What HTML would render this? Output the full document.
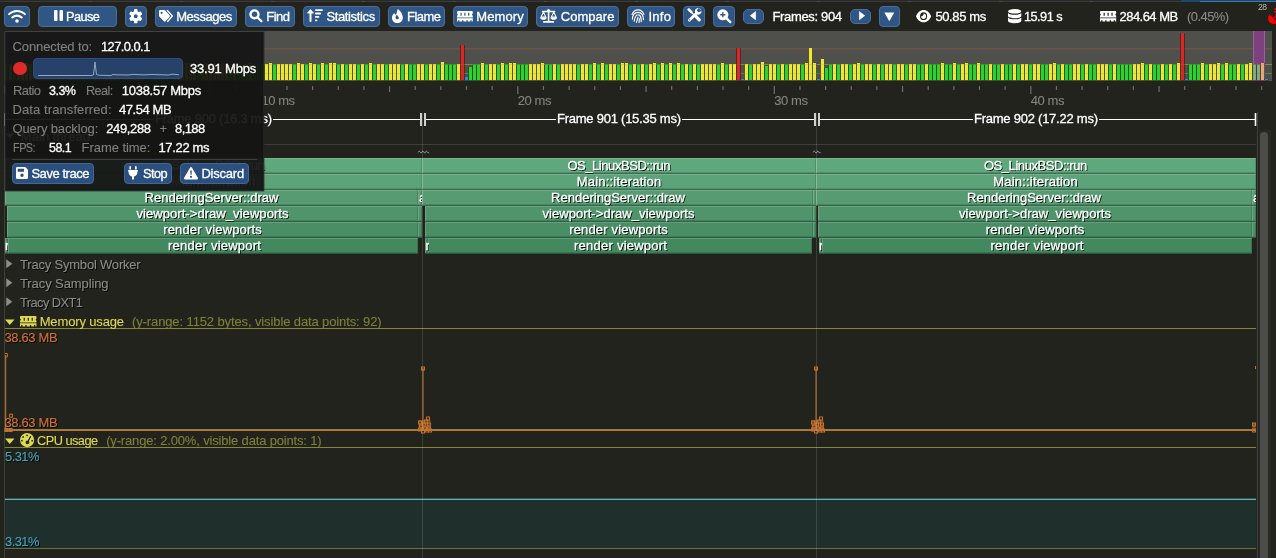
<!DOCTYPE html>
<html><head><meta charset="utf-8"><title>Tracy Profiler</title><style>
html,body{margin:0;padding:0;background:#21231c;}
#r{will-change:transform;position:relative;width:1276px;height:558px;overflow:hidden;background:#21231c;font-family:"Liberation Sans", sans-serif;font-size:13px;}
#r div,#r span,#r svg{position:absolute;}
#r svg{overflow:visible}
.t{white-space:pre;line-height:16px;height:16px;-webkit-text-stroke:.3px;}
.b{box-sizing:border-box;border-radius:4px;}
</style></head><body><div id="r">
<div style="left:0px;top:0px;width:1276px;height:1px;background:#2a282a;"></div>
<div style="left:0px;top:1px;width:1276px;height:1px;background:#3a3a37;"></div>
<div style="left:89px;top:1px;width:3px;height:1px;background:#4c4c49;"></div>
<div style="left:180px;top:1px;width:3px;height:1px;background:#4c4c49;"></div>
<div style="left:271px;top:1px;width:3px;height:1px;background:#4c4c49;"></div>
<div style="left:362px;top:1px;width:3px;height:1px;background:#4c4c49;"></div>
<div style="left:453px;top:1px;width:3px;height:1px;background:#4c4c49;"></div>
<div style="left:544px;top:1px;width:3px;height:1px;background:#4c4c49;"></div>
<div style="left:635px;top:1px;width:3px;height:1px;background:#4c4c49;"></div>
<div style="left:726px;top:1px;width:3px;height:1px;background:#4c4c49;"></div>
<div style="left:817px;top:1px;width:3px;height:1px;background:#4c4c49;"></div>
<div style="left:908px;top:1px;width:3px;height:1px;background:#4c4c49;"></div>
<div style="left:999px;top:1px;width:3px;height:1px;background:#4c4c49;"></div>
<div style="left:1090px;top:1px;width:3px;height:1px;background:#4c4c49;"></div>
<div style="left:1181px;top:1px;width:3px;height:1px;background:#4c4c49;"></div>
<div style="left:1181px;top:0px;width:95px;height:1px;background:#1c4a78;"></div>
<div style="left:1181px;top:1px;width:95px;height:1px;background:#4478a8;"></div>
<div style="left:1181px;top:0px;width:19px;height:2px;background:#1d4672;"></div>
<div class="b" style="left:4px;top:6px;width:26px;height:21px;background:#2f5684;border:1px solid #4a6d99;border-radius:4px"></div>
<svg style="left:7.9px;top:8.5px;color:#fff" width="18" height="14.2" viewBox="0 0 20 16" preserveAspectRatio="none"><path d="M1.2 5.8A12.5 12.5 0 0 1 18.8 5.8" fill="none" stroke="currentColor" stroke-width="2.3" stroke-linecap="round"/><path d="M4.8 9.6A7.4 7.4 0 0 1 15.2 9.6" fill="none" stroke="currentColor" stroke-width="2.3" stroke-linecap="round"/><circle cx="10" cy="13.6" r="2" fill="currentColor"/></svg>
<div class="b" style="left:38px;top:6px;width:79px;height:21px;background:#2f5684;border:1px solid #4a6d99;border-radius:4px"></div>
<svg style="left:54px;top:10px;color:#fff" width="9" height="11" viewBox="0 0 9 11" preserveAspectRatio="none"><rect x="0" y="0" width="3.5" height="11" rx="1.1" fill="currentColor"/><rect x="5.5" y="0" width="3.5" height="11" rx="1.1" fill="currentColor"/></svg>
<span class="t" style="left:66.4px;top:9.00px;color:#fff;font-size:13px;letter-spacing:-0.550px;transform:scaleX(0.9776);transform-origin:0 0;">Pause</span>
<div class="b" style="left:125px;top:6px;width:22px;height:21px;background:#2f5684;border:1px solid #4a6d99;border-radius:4px"></div>
<svg style="left:129.2px;top:8.5px;color:#fff" width="13.5" height="14.4" viewBox="0 0 16 16" preserveAspectRatio="none"><path fill-rule="evenodd" d="M6.70 0.77L9.30 0.77L9.61 3.05L11.48 4.14L13.61 3.26L14.92 5.51L13.09 6.92L13.09 9.08L14.92 10.49L13.61 12.74L11.48 11.86L9.61 12.95L9.30 15.23L6.70 15.23L6.39 12.95L4.52 11.86L2.39 12.74L1.08 10.49L2.91 9.08L2.91 6.92L1.08 5.51L2.39 3.26L4.52 4.14L6.39 3.05ZM10.90 8A2.9 2.9 0 1 0 5.10 8A2.9 2.9 0 1 0 10.90 8Z" fill="currentColor" stroke="currentColor" stroke-width="1.3" stroke-linejoin="round"/></svg>
<div class="b" style="left:155px;top:6px;width:82px;height:21px;background:#2f5684;border:1px solid #4a6d99;border-radius:4px"></div>
<svg style="left:158.8px;top:9.5px;color:#fff" width="14.4" height="12.5" viewBox="0 0 16 13" preserveAspectRatio="none"><path d="M0 1.2Q0 0 1.2 0H5.8Q6.4 0 6.9 .5L11.8 5.4Q12.6 6.3 11.8 7.2L7.2 11.8Q6.3 12.6 5.4 11.8L.5 6.9Q0 6.4 0 5.8ZM2.9 1.7A1.2 1.2 0 1 0 2.9 4.1A1.2 1.2 0 1 0 2.9 1.7Z" fill-rule="evenodd" fill="currentColor"/><path d="M9.3 .6L14.9 6.2L9.6 12" fill="none" stroke="currentColor" stroke-width="1.5" stroke-linecap="round" stroke-linejoin="round"/></svg>
<span class="t" style="left:176.2px;top:9.00px;color:#fff;font-size:13px;letter-spacing:-0.450px;">Messages</span>
<div class="b" style="left:245px;top:6px;width:50px;height:21px;background:#2f5684;border:1px solid #4a6d99;border-radius:4px"></div>
<svg style="left:249px;top:9.4px;color:#fff" width="13.7" height="13.4" viewBox="0 0 16 16" preserveAspectRatio="none"><circle cx="6.4" cy="6.4" r="4.7" fill="none" stroke="currentColor" stroke-width="2.8"/><path d="M10.4 10.4L14.6 14.6" stroke="currentColor" stroke-width="2.6" stroke-linecap="round"/></svg>
<span class="t" style="left:266.2px;top:9.00px;color:#fff;font-size:13px;letter-spacing:-0.499px;">Find</span>
<div class="b" style="left:303px;top:6px;width:77px;height:21px;background:#2f5684;border:1px solid #4a6d99;border-radius:4px"></div>
<svg style="left:307px;top:9.3px;color:#fff" width="16" height="12.7" viewBox="0 0 16 13" preserveAspectRatio="none"><path d="M3.5 12.4V2.2" stroke="currentColor" stroke-width="2" stroke-linecap="round" fill="none"/><path d="M.5 4.2L3.5 .6L6.5 4.2Z" fill="currentColor" stroke="currentColor" stroke-width=".8" stroke-linejoin="round"/><path d="M8.9 1.1H15M8.9 4.6H13.1M8.9 8.1H11.4M8.9 11.6H9.5" stroke="currentColor" stroke-width="1.9" stroke-linecap="round"/></svg>
<span class="t" style="left:326.4px;top:9.00px;color:#fff;font-size:13px;letter-spacing:-0.357px;">Statistics</span>
<div class="b" style="left:388px;top:6px;width:57px;height:21px;background:#2f5684;border:1px solid #4a6d99;border-radius:4px"></div>
<svg style="left:391.8px;top:8.7px;color:#fff" width="10.8" height="14.1" viewBox="0 0 12 16" preserveAspectRatio="none"><path fill-rule="evenodd" d="M6.6 0C9 2 12 5.6 12 9.8C12 13.4 9.4 16 6 16S0 13.4 0 9.8C0 7.4 1.2 5.6 2.6 4.4C2.8 5.4 3.4 6.2 4.2 6.4C5.6 5.6 5.2 2 6.6 0ZM5.6 6.2C4.6 7.4 3.9 8.4 3.9 9.6C3.9 10.8 4.8 11.6 5.9 11.6S7.8 10.8 7.6 9.6C7.4 8.8 6.4 8.6 5.6 6.2Z" fill="currentColor"/></svg>
<span class="t" style="left:406.5px;top:9.00px;color:#fff;font-size:13px;letter-spacing:-0.550px;transform:scaleX(0.9993);transform-origin:0 0;">Flame</span>
<div class="b" style="left:453px;top:6px;width:75px;height:21px;background:#2f5684;border:1px solid #4a6d99;border-radius:4px"></div>
<svg style="left:457.2px;top:10.6px;color:#fff" width="15.8" height="10.6" viewBox="0 0 20 12" preserveAspectRatio="none"><path fill-rule="evenodd" d="M1 0H19Q20 0 20 1V2.8Q19 3.2 19 4.1T20 5.4V7.4H0V5.4Q1 5 1 4.1T0 2.8V1Q0 0 1 0ZM4.4 1.9V5.4H5.9V1.9ZM9.25 1.9V5.4H10.75V1.9ZM14.1 1.9V5.4H15.6V1.9Z" fill="currentColor"/><path d="M0 8.2H20V12H18.6V10.4H16.9V12H13.6V10.4H11.9V12H8.1V10.4H6.4V12H3.1V10.4H1.4V12H0Z" fill="currentColor"/></svg>
<span class="t" style="left:476.2px;top:9.00px;color:#fff;font-size:13px;letter-spacing:0.129px;">Memory</span>
<div class="b" style="left:536px;top:6px;width:83px;height:21px;background:#2f5684;border:1px solid #4a6d99;border-radius:4px"></div>
<svg style="left:540.2px;top:8.8px;color:#fff" width="17.2" height="14" viewBox="0 0 20 16" preserveAspectRatio="none"><path d="M10 1.5V14" stroke="currentColor" stroke-width="1.9" fill="none"/><circle cx="10" cy="2" r="1.9" fill="currentColor"/><path d="M3 2.8H17" stroke="currentColor" stroke-width="1.7" stroke-linecap="round"/><path d="M4.5 14.8H15.5" stroke="currentColor" stroke-width="2" stroke-linecap="round"/><path d="M4 3.4L1.2 9.2H6.8Z" fill="none" stroke="currentColor" stroke-width="1.2" stroke-linejoin="round"/><path d="M.2 9.4H7.8C7.8 11.4 6 12.4 4 12.4S.2 11.4 .2 9.4Z" fill="currentColor"/><path d="M16 3.4L13.2 9.2H18.8Z" fill="none" stroke="currentColor" stroke-width="1.2" stroke-linejoin="round"/><path d="M12.2 9.4H19.8C19.8 11.4 18 12.4 16 12.4S12.2 11.4 12.2 9.4Z" fill="currentColor"/></svg>
<span class="t" style="left:560.7px;top:9.00px;color:#fff;font-size:13px;letter-spacing:0.055px;">Compare</span>
<div class="b" style="left:627px;top:6px;width:48px;height:21px;background:#2f5684;border:1px solid #4a6d99;border-radius:4px"></div>
<svg style="left:631px;top:8.7px;color:#fff" width="14" height="14" viewBox="0 0 16 16" preserveAspectRatio="none"><g fill="none" stroke="currentColor" stroke-width="1.3" stroke-linecap="round"><path d="M1.2 6.2C2.6 2.8 5.2 1 8 1S13.4 2.8 14.8 6.2"/><path d="M1.6 11.5C1.8 7 4 3.8 8 3.8S14.3 7 14.3 12.2"/><path d="M3.6 14C4.4 10.4 4.6 6.6 8 6.6S11.6 10 11.7 14.6"/><path d="M6.2 15.2C6.9 12.8 7.6 11 8 9.3"/><path d="M9.2 15.4C9.4 13.6 9.5 12 9.5 11"/></g></svg>
<span class="t" style="left:648.4px;top:9.00px;color:#fff;font-size:13px;letter-spacing:0.271px;">Info</span>
<div class="b" style="left:683px;top:6px;width:22px;height:21px;background:#2f5684;border:1px solid #4a6d99;border-radius:4px"></div>
<svg style="left:686.6px;top:8.4px;color:#fff" width="14.6" height="14.4" viewBox="0 0 16 16" preserveAspectRatio="none"><g stroke="currentColor" fill="none"><path d="M1.9 1.7L4.8 4.6" stroke-width="2.9" stroke-linecap="round"/><path d="M4.6 4.6L8.4 8.4" stroke-width="1.5"/><path d="M9 8.6L13.4 13.2" stroke-width="3.6" stroke-linecap="round"/><path d="M10.4 5.8L2.6 13.6" stroke-width="3" stroke-linecap="round"/></g><path fill-rule="evenodd" d="M11.6 0C13.6 -.2 15.6 1.2 15.9 3.4C16.2 5.6 14.6 7.4 12.4 7.4C10.2 7.4 8.6 5.8 8.6 3.8C8.6 2 9.8 .4 11.6 0ZM12.4 -.4L10.8 3L12.6 4.8L16.4 3.4Z" fill="currentColor"/><circle cx="2.9" cy="13.3" r=".7" fill="#2f5684"/></svg>
<div class="b" style="left:713px;top:6px;width:22px;height:21px;background:#2f5684;border:1px solid #4a6d99;border-radius:4px"></div>
<svg style="left:717px;top:8.7px;color:#fff" width="14.6" height="14.4" viewBox="0 0 16 16" preserveAspectRatio="none"><circle cx="6.4" cy="6.4" r="6.1" fill="currentColor"/><path d="M10.4 10.4L14.6 14.6" stroke="currentColor" stroke-width="2.6" stroke-linecap="round"/><path d="M3.6 6.4H9.2M6.4 3.6V9.2" stroke="#2f5684" stroke-width="1.5"/></svg>
<div class="b" style="left:743px;top:9px;width:21px;height:15px;background:#2f5684;border:1px solid #4a6d99;border-radius:5px"></div>
<svg style="left:749.8px;top:11.3px;color:#fff" width="6" height="9.3" viewBox="0 0 6 10" preserveAspectRatio="none"><path d="M5.6 .6V9.4L.3 5Z" fill="currentColor" stroke="currentColor" stroke-width=".6" stroke-linejoin="round"/></svg>
<span class="t" style="left:772.5px;top:9.00px;color:#fff;font-size:13px;letter-spacing:-0.348px;">Frames: 904</span>
<div class="b" style="left:850px;top:9px;width:21px;height:15px;background:#2f5684;border:1px solid #4a6d99;border-radius:5px"></div>
<svg style="left:859px;top:11.3px;color:#fff" width="6" height="9.3" viewBox="0 0 6 10" preserveAspectRatio="none"><path d="M.4 .6V9.4L5.7 5Z" fill="currentColor" stroke="currentColor" stroke-width=".6" stroke-linejoin="round"/></svg>
<div class="b" style="left:879px;top:6px;width:21px;height:21px;background:#2f5684;border:1px solid #4a6d99;border-radius:4px"></div>
<svg style="left:884.4px;top:11.6px;color:#fff" width="10.6" height="9.6" viewBox="0 0 10 9" preserveAspectRatio="none"><path d="M.3 .4H9.7L5 8.7Z" fill="currentColor"/></svg>
<svg style="left:916.2px;top:9.6px;color:#fff" width="15.2" height="12.3" viewBox="0 0 18 13" preserveAspectRatio="none"><path fill-rule="evenodd" d="M9 0C13 0 16.4 2.8 18 6.5C16.4 10.2 13 13 9 13S1.6 10.2 0 6.5C1.6 2.8 5 0 9 0ZM9 2.3A4.2 4.2 0 1 0 9 10.7A4.2 4.2 0 1 0 9 2.3Z" fill="currentColor"/><path d="M9 3.6A2.9 2.9 0 1 1 6.1 6.5C7.6 6.7 9.2 5.2 9 3.6Z" fill="currentColor"/></svg>
<span class="t" style="left:935.4px;top:9.00px;color:#fff;font-size:13px;letter-spacing:-0.369px;">50.85 ms</span>
<svg style="left:1007.5px;top:8.8px;color:#fff" width="13.3" height="14.2" viewBox="0 0 14 16" preserveAspectRatio="none"><ellipse cx="7" cy="2.6" rx="7" ry="2.6" fill="currentColor"/><path d="M0 4.4C1.4 6 4 6.5 7 6.5S12.6 6 14 4.4V7.8C14 9.2 11 10.4 7 10.4S0 9.2 0 7.8Z" fill="currentColor"/><path d="M0 9.6C1.4 11.2 4 11.7 7 11.7S12.6 11.2 14 9.6V13.2C14 14.8 11 16 7 16S0 14.8 0 13.2Z" fill="currentColor"/></svg>
<span class="t" style="left:1023.7px;top:9.00px;color:#fff;font-size:13px;letter-spacing:-0.550px;transform:scaleX(0.9808);transform-origin:0 0;">15.91 s</span>
<svg style="left:1099.8px;top:10.6px;color:#fff" width="16.2" height="10.6" viewBox="0 0 20 12" preserveAspectRatio="none"><path fill-rule="evenodd" d="M1 0H19Q20 0 20 1V2.8Q19 3.2 19 4.1T20 5.4V7.4H0V5.4Q1 5 1 4.1T0 2.8V1Q0 0 1 0ZM4.4 1.9V5.4H5.9V1.9ZM9.25 1.9V5.4H10.75V1.9ZM14.1 1.9V5.4H15.6V1.9Z" fill="currentColor"/><path d="M0 8.2H20V12H18.6V10.4H16.9V12H13.6V10.4H11.9V12H8.1V10.4H6.4V12H3.1V10.4H1.4V12H0Z" fill="currentColor"/></svg>
<span class="t" style="left:1119.5px;top:9.00px;color:#fff;font-size:13px;letter-spacing:-0.534px;">284.64 MB</span>
<span class="t" style="left:1187.3px;top:9.00px;color:#8a8a8a;font-size:13px;letter-spacing:-0.550px;-webkit-text-stroke:.1px;transform:scaleX(0.9969);transform-origin:0 0;">(0.45%)</span>
<span class="t" style="left:1258.3px;top:1.23px;color:#b8b8b0;font-size:9.5px;letter-spacing:-0.550px;line-height:11.69px;height:11.69px;transform:scaleX(0.9074);transform-origin:0 0;-webkit-text-stroke:0;">28</span>
<svg style="left:1267.5px;top:7.6px;color:#f00" width="16" height="16" viewBox="0 0 16 16" preserveAspectRatio="none"><path d="M1.4 6.2C-.6 9.2 -.2 12.6 1.8 14.4C3.8 16.4 7 16.6 10 14.6Z" fill="currentColor"/><path d="M5.2 10.8L8.2 7.8" stroke="currentColor" stroke-width="1.3"/><circle cx="8.6" cy="7.4" r="1.5" fill="currentColor"/><path d="M7 .8C11.8 .8 15.2 4.2 15.2 9" fill="none" stroke="currentColor" stroke-width="1.7" stroke-linecap="round"/><path d="M7 3.9C10 3.9 12.1 6 12.1 9" fill="none" stroke="currentColor" stroke-width="1.7" stroke-linecap="round"/></svg>
<div style="left:5px;top:31px;width:1267px;height:50px;background:#4f504b;"></div>
<div style="left:5px;top:48px;width:1267px;height:1px;background:#6b5348;"></div>
<div style="left:5px;top:49px;width:1267px;height:1px;background:#5f524a;"></div>
<div style="left:5px;top:64px;width:1267px;height:1px;background:#85844c;"></div>
<div style="left:5px;top:73px;width:1267px;height:1px;background:#4f8a4a;"></div>
<div style="left:1253px;top:31px;width:12px;height:50px;background:#7f4080;border-left:1px solid #96629a;border-right:1px solid #96629a;box-sizing:border-box;"></div>
<svg style="left:0px;top:0px;" width="1276" height="90" viewBox="0 0 1276 90"><rect x="4.4" y="64.4" width="4.2" height="16.0" fill="#115011"/><rect x="5" y="64.4" width="3" height="15.6" fill="#2fd32f"/><rect x="8.4" y="64" width="4.2" height="16.4" fill="#5a5716"/><rect x="9" y="64" width="3" height="16" fill="#ede73c"/><rect x="12.4" y="64.4" width="4.2" height="16.0" fill="#115011"/><rect x="13" y="64.4" width="3" height="15.6" fill="#2fd32f"/><rect x="16.4" y="64" width="4.2" height="16.4" fill="#5a5716"/><rect x="17" y="64" width="3" height="16" fill="#ede73c"/><rect x="20.4" y="64" width="4.2" height="16.4" fill="#5a5716"/><rect x="21" y="64" width="3" height="16" fill="#ede73c"/><rect x="24.4" y="63" width="4.2" height="17.4" fill="#5a5716"/><rect x="25" y="63" width="3" height="17" fill="#ede73c"/><rect x="28.4" y="64" width="4.2" height="16.4" fill="#5a5716"/><rect x="29" y="64" width="3" height="16" fill="#ede73c"/><rect x="32.4" y="64.4" width="4.2" height="16.0" fill="#115011"/><rect x="33" y="64.4" width="3" height="15.6" fill="#2fd32f"/><rect x="36.4" y="63" width="4.2" height="17.4" fill="#5a5716"/><rect x="37" y="63" width="3" height="17" fill="#ede73c"/><rect x="40.4" y="64" width="4.2" height="16.4" fill="#5a5716"/><rect x="41" y="64" width="3" height="16" fill="#ede73c"/><rect x="44.4" y="63" width="4.2" height="17.4" fill="#5a5716"/><rect x="45" y="63" width="3" height="17" fill="#ede73c"/><rect x="48.4" y="64" width="4.2" height="16.4" fill="#5a5716"/><rect x="49" y="64" width="3" height="16" fill="#ede73c"/><rect x="52.4" y="64" width="4.2" height="16.4" fill="#5a5716"/><rect x="53" y="64" width="3" height="16" fill="#ede73c"/><rect x="56.4" y="64" width="4.2" height="16.4" fill="#5a5716"/><rect x="57" y="64" width="3" height="16" fill="#ede73c"/><rect x="60.4" y="64.4" width="4.2" height="16.0" fill="#115011"/><rect x="61" y="64.4" width="3" height="15.6" fill="#2fd32f"/><rect x="64.4" y="64.4" width="4.2" height="16.0" fill="#115011"/><rect x="65" y="64.4" width="3" height="15.6" fill="#2fd32f"/><rect x="68.4" y="64" width="4.2" height="16.4" fill="#5a5716"/><rect x="69" y="64" width="3" height="16" fill="#ede73c"/><rect x="72.4" y="64" width="4.2" height="16.4" fill="#5a5716"/><rect x="73" y="64" width="3" height="16" fill="#ede73c"/><rect x="76.4" y="64" width="4.2" height="16.4" fill="#5a5716"/><rect x="77" y="64" width="3" height="16" fill="#ede73c"/><rect x="80.4" y="63" width="4.2" height="17.4" fill="#5a5716"/><rect x="81" y="63" width="3" height="17" fill="#ede73c"/><rect x="84.4" y="64.4" width="4.2" height="16.0" fill="#115011"/><rect x="85" y="64.4" width="3" height="15.6" fill="#2fd32f"/><rect x="88.4" y="64" width="4.2" height="16.4" fill="#5a5716"/><rect x="89" y="64" width="3" height="16" fill="#ede73c"/><rect x="92.4" y="63" width="4.2" height="17.4" fill="#5a5716"/><rect x="93" y="63" width="3" height="17" fill="#ede73c"/><rect x="96.4" y="64" width="4.2" height="16.4" fill="#5a5716"/><rect x="97" y="64" width="3" height="16" fill="#ede73c"/><rect x="100.4" y="64" width="4.2" height="16.4" fill="#5a5716"/><rect x="101" y="64" width="3" height="16" fill="#ede73c"/><rect x="104.4" y="63" width="4.2" height="17.4" fill="#5a5716"/><rect x="105" y="63" width="3" height="17" fill="#ede73c"/><rect x="108.4" y="64" width="4.2" height="16.4" fill="#5a5716"/><rect x="109" y="64" width="3" height="16" fill="#ede73c"/><rect x="112.4" y="63" width="4.2" height="17.4" fill="#5a5716"/><rect x="113" y="63" width="3" height="17" fill="#ede73c"/><rect x="116.4" y="63" width="4.2" height="17.4" fill="#5a5716"/><rect x="117" y="63" width="3" height="17" fill="#ede73c"/><rect x="120.4" y="64.4" width="4.2" height="16.0" fill="#115011"/><rect x="121" y="64.4" width="3" height="15.6" fill="#2fd32f"/><rect x="124.4" y="64" width="4.2" height="16.4" fill="#5a5716"/><rect x="125" y="64" width="3" height="16" fill="#ede73c"/><rect x="128.4" y="64" width="4.2" height="16.4" fill="#5a5716"/><rect x="129" y="64" width="3" height="16" fill="#ede73c"/><rect x="132.4" y="64" width="4.2" height="16.4" fill="#5a5716"/><rect x="133" y="64" width="3" height="16" fill="#ede73c"/><rect x="136.4" y="63" width="4.2" height="17.4" fill="#5a5716"/><rect x="137" y="63" width="3" height="17" fill="#ede73c"/><rect x="140.4" y="64" width="4.2" height="16.4" fill="#5a5716"/><rect x="141" y="64" width="3" height="16" fill="#ede73c"/><rect x="144.4" y="64.4" width="4.2" height="16.0" fill="#115011"/><rect x="145" y="64.4" width="3" height="15.6" fill="#2fd32f"/><rect x="148.4" y="64.4" width="4.2" height="16.0" fill="#115011"/><rect x="149" y="64.4" width="3" height="15.6" fill="#2fd32f"/><rect x="152.4" y="64" width="4.2" height="16.4" fill="#5a5716"/><rect x="153" y="64" width="3" height="16" fill="#ede73c"/><rect x="156.4" y="63" width="4.2" height="17.4" fill="#5a5716"/><rect x="157" y="63" width="3" height="17" fill="#ede73c"/><rect x="160.4" y="64" width="4.2" height="16.4" fill="#5a5716"/><rect x="161" y="64" width="3" height="16" fill="#ede73c"/><rect x="164.4" y="63" width="4.2" height="17.4" fill="#5a5716"/><rect x="165" y="63" width="3" height="17" fill="#ede73c"/><rect x="168.4" y="64.4" width="4.2" height="16.0" fill="#115011"/><rect x="169" y="64.4" width="3" height="15.6" fill="#2fd32f"/><rect x="172.4" y="63" width="4.2" height="17.4" fill="#5a5716"/><rect x="173" y="63" width="3" height="17" fill="#ede73c"/><rect x="176.4" y="64" width="4.2" height="16.4" fill="#5a5716"/><rect x="177" y="64" width="3" height="16" fill="#ede73c"/><rect x="180.4" y="64" width="4.2" height="16.4" fill="#5a5716"/><rect x="181" y="64" width="3" height="16" fill="#ede73c"/><rect x="184.4" y="63" width="4.2" height="17.4" fill="#5a5716"/><rect x="185" y="63" width="3" height="17" fill="#ede73c"/><rect x="188.4" y="63" width="4.2" height="17.4" fill="#5a5716"/><rect x="189" y="63" width="3" height="17" fill="#ede73c"/><rect x="192.4" y="64" width="4.2" height="16.4" fill="#5a5716"/><rect x="193" y="64" width="3" height="16" fill="#ede73c"/><rect x="196.4" y="64.4" width="4.2" height="16.0" fill="#115011"/><rect x="197" y="64.4" width="3" height="15.6" fill="#2fd32f"/><rect x="200.4" y="64" width="4.2" height="16.4" fill="#5a5716"/><rect x="201" y="64" width="3" height="16" fill="#ede73c"/><rect x="204.4" y="63" width="4.2" height="17.4" fill="#5a5716"/><rect x="205" y="63" width="3" height="17" fill="#ede73c"/><rect x="208.4" y="64" width="4.2" height="16.4" fill="#5a5716"/><rect x="209" y="64" width="3" height="16" fill="#ede73c"/><rect x="212.4" y="63" width="4.2" height="17.4" fill="#5a5716"/><rect x="213" y="63" width="3" height="17" fill="#ede73c"/><rect x="216.4" y="64" width="4.2" height="16.4" fill="#5a5716"/><rect x="217" y="64" width="3" height="16" fill="#ede73c"/><rect x="220.4" y="63" width="4.2" height="17.4" fill="#5a5716"/><rect x="221" y="63" width="3" height="17" fill="#ede73c"/><rect x="224.4" y="64" width="4.2" height="16.4" fill="#5a5716"/><rect x="225" y="64" width="3" height="16" fill="#ede73c"/><rect x="228.4" y="64.4" width="4.2" height="16.0" fill="#115011"/><rect x="229" y="64.4" width="3" height="15.6" fill="#2fd32f"/><rect x="232.4" y="63" width="4.2" height="17.4" fill="#5a5716"/><rect x="233" y="63" width="3" height="17" fill="#ede73c"/><rect x="236.4" y="64.4" width="4.2" height="16.0" fill="#115011"/><rect x="237" y="64.4" width="3" height="15.6" fill="#2fd32f"/><rect x="240.4" y="64.4" width="4.2" height="16.0" fill="#115011"/><rect x="241" y="64.4" width="3" height="15.6" fill="#2fd32f"/><rect x="244.4" y="64.4" width="4.2" height="16.0" fill="#115011"/><rect x="245" y="64.4" width="3" height="15.6" fill="#2fd32f"/><rect x="248.4" y="63" width="4.2" height="17.4" fill="#5a5716"/><rect x="249" y="63" width="3" height="17" fill="#ede73c"/><rect x="252.4" y="64.4" width="4.2" height="16.0" fill="#115011"/><rect x="253" y="64.4" width="3" height="15.6" fill="#2fd32f"/><rect x="256.4" y="64.4" width="4.2" height="16.0" fill="#115011"/><rect x="257" y="64.4" width="3" height="15.6" fill="#2fd32f"/><rect x="260.4" y="64.4" width="4.2" height="16.0" fill="#115011"/><rect x="261" y="64.4" width="3" height="15.6" fill="#2fd32f"/><rect x="264.4" y="64" width="4.2" height="16.4" fill="#5a5716"/><rect x="265" y="64" width="3" height="16" fill="#ede73c"/><rect x="268.4" y="63" width="4.2" height="17.4" fill="#5a5716"/><rect x="269" y="63" width="3" height="17" fill="#ede73c"/><rect x="272.4" y="64.4" width="4.2" height="16.0" fill="#115011"/><rect x="273" y="64.4" width="3" height="15.6" fill="#2fd32f"/><rect x="276.4" y="64" width="4.2" height="16.4" fill="#5a5716"/><rect x="277" y="64" width="3" height="16" fill="#ede73c"/><rect x="280.4" y="64" width="4.2" height="16.4" fill="#5a5716"/><rect x="281" y="64" width="3" height="16" fill="#ede73c"/><rect x="284.4" y="64" width="4.2" height="16.4" fill="#5a5716"/><rect x="285" y="64" width="3" height="16" fill="#ede73c"/><rect x="288.4" y="64" width="4.2" height="16.4" fill="#5a5716"/><rect x="289" y="64" width="3" height="16" fill="#ede73c"/><rect x="292.4" y="64.4" width="4.2" height="16.0" fill="#115011"/><rect x="293" y="64.4" width="3" height="15.6" fill="#2fd32f"/><rect x="296.4" y="63" width="4.2" height="17.4" fill="#5a5716"/><rect x="297" y="63" width="3" height="17" fill="#ede73c"/><rect x="300.4" y="64" width="4.2" height="16.4" fill="#5a5716"/><rect x="301" y="64" width="3" height="16" fill="#ede73c"/><rect x="304.4" y="64.4" width="4.2" height="16.0" fill="#115011"/><rect x="305" y="64.4" width="3" height="15.6" fill="#2fd32f"/><rect x="308.4" y="63" width="4.2" height="17.4" fill="#5a5716"/><rect x="309" y="63" width="3" height="17" fill="#ede73c"/><rect x="312.4" y="64" width="4.2" height="16.4" fill="#5a5716"/><rect x="313" y="64" width="3" height="16" fill="#ede73c"/><rect x="316.4" y="64.4" width="4.2" height="16.0" fill="#115011"/><rect x="317" y="64.4" width="3" height="15.6" fill="#2fd32f"/><rect x="320.4" y="63" width="4.2" height="17.4" fill="#5a5716"/><rect x="321" y="63" width="3" height="17" fill="#ede73c"/><rect x="324.4" y="64.4" width="4.2" height="16.0" fill="#115011"/><rect x="325" y="64.4" width="3" height="15.6" fill="#2fd32f"/><rect x="328.4" y="63" width="4.2" height="17.4" fill="#5a5716"/><rect x="329" y="63" width="3" height="17" fill="#ede73c"/><rect x="332.4" y="63" width="4.2" height="17.4" fill="#5a5716"/><rect x="333" y="63" width="3" height="17" fill="#ede73c"/><rect x="336.4" y="64.4" width="4.2" height="16.0" fill="#115011"/><rect x="337" y="64.4" width="3" height="15.6" fill="#2fd32f"/><rect x="340.4" y="64" width="4.2" height="16.4" fill="#5a5716"/><rect x="341" y="64" width="3" height="16" fill="#ede73c"/><rect x="344.4" y="64.4" width="4.2" height="16.0" fill="#115011"/><rect x="345" y="64.4" width="3" height="15.6" fill="#2fd32f"/><rect x="348.4" y="64" width="4.2" height="16.4" fill="#5a5716"/><rect x="349" y="64" width="3" height="16" fill="#ede73c"/><rect x="352.4" y="64" width="4.2" height="16.4" fill="#5a5716"/><rect x="353" y="64" width="3" height="16" fill="#ede73c"/><rect x="356.4" y="64.4" width="4.2" height="16.0" fill="#115011"/><rect x="357" y="64.4" width="3" height="15.6" fill="#2fd32f"/><rect x="360.4" y="64" width="4.2" height="16.4" fill="#5a5716"/><rect x="361" y="64" width="3" height="16" fill="#ede73c"/><rect x="364.4" y="64.4" width="4.2" height="16.0" fill="#115011"/><rect x="365" y="64.4" width="3" height="15.6" fill="#2fd32f"/><rect x="368.4" y="63" width="4.2" height="17.4" fill="#5a5716"/><rect x="369" y="63" width="3" height="17" fill="#ede73c"/><rect x="372.4" y="64.4" width="4.2" height="16.0" fill="#115011"/><rect x="373" y="64.4" width="3" height="15.6" fill="#2fd32f"/><rect x="376.4" y="64" width="4.2" height="16.4" fill="#5a5716"/><rect x="377" y="64" width="3" height="16" fill="#ede73c"/><rect x="380.4" y="64" width="4.2" height="16.4" fill="#5a5716"/><rect x="381" y="64" width="3" height="16" fill="#ede73c"/><rect x="384.4" y="64.4" width="4.2" height="16.0" fill="#115011"/><rect x="385" y="64.4" width="3" height="15.6" fill="#2fd32f"/><rect x="388.4" y="64" width="4.2" height="16.4" fill="#5a5716"/><rect x="389" y="64" width="3" height="16" fill="#ede73c"/><rect x="392.4" y="64" width="4.2" height="16.4" fill="#5a5716"/><rect x="393" y="64" width="3" height="16" fill="#ede73c"/><rect x="396.4" y="64" width="4.2" height="16.4" fill="#5a5716"/><rect x="397" y="64" width="3" height="16" fill="#ede73c"/><rect x="400.4" y="64.4" width="4.2" height="16.0" fill="#115011"/><rect x="401" y="64.4" width="3" height="15.6" fill="#2fd32f"/><rect x="404.4" y="64" width="4.2" height="16.4" fill="#5a5716"/><rect x="405" y="64" width="3" height="16" fill="#ede73c"/><rect x="408.4" y="64.4" width="4.2" height="16.0" fill="#115011"/><rect x="409" y="64.4" width="3" height="15.6" fill="#2fd32f"/><rect x="412.4" y="64.4" width="4.2" height="16.0" fill="#115011"/><rect x="413" y="64.4" width="3" height="15.6" fill="#2fd32f"/><rect x="416.4" y="64" width="4.2" height="16.4" fill="#5a5716"/><rect x="417" y="64" width="3" height="16" fill="#ede73c"/><rect x="420.4" y="64" width="4.2" height="16.4" fill="#5a5716"/><rect x="421" y="64" width="3" height="16" fill="#ede73c"/><rect x="424.4" y="64.4" width="4.2" height="16.0" fill="#115011"/><rect x="425" y="64.4" width="3" height="15.6" fill="#2fd32f"/><rect x="428.4" y="64" width="4.2" height="16.4" fill="#5a5716"/><rect x="429" y="64" width="3" height="16" fill="#ede73c"/><rect x="432.4" y="64" width="4.2" height="16.4" fill="#5a5716"/><rect x="433" y="64" width="3" height="16" fill="#ede73c"/><rect x="436.4" y="64.4" width="4.2" height="16.0" fill="#115011"/><rect x="437" y="64.4" width="3" height="15.6" fill="#2fd32f"/><rect x="440.4" y="62" width="4.2" height="18.4" fill="#5a5716"/><rect x="441" y="62" width="3" height="18" fill="#ede73c"/><rect x="444.4" y="64.4" width="4.2" height="16.0" fill="#115011"/><rect x="445" y="64.4" width="3" height="15.6" fill="#2fd32f"/><rect x="448.4" y="64.4" width="4.2" height="16.0" fill="#115011"/><rect x="449" y="64.4" width="3" height="15.6" fill="#2fd32f"/><rect x="452.4" y="64.4" width="4.2" height="16.0" fill="#115011"/><rect x="453" y="64.4" width="3" height="15.6" fill="#2fd32f"/><rect x="456.4" y="64" width="4.2" height="16.4" fill="#5a5716"/><rect x="457" y="64" width="3" height="16" fill="#ede73c"/><rect x="460.4" y="45" width="4.2" height="35.4" fill="#530e0e"/><rect x="461" y="45" width="3" height="35" fill="#dc2626"/><rect x="464.4" y="77" width="4.2" height="3.4" fill="#0f3652"/><rect x="465" y="77" width="3" height="3" fill="#2a8fd8"/><rect x="468.4" y="67" width="4.2" height="13.4" fill="#115011"/><rect x="469" y="67" width="3" height="13" fill="#2fd32f"/><rect x="472.4" y="64.4" width="4.2" height="16.0" fill="#115011"/><rect x="473" y="64.4" width="3" height="15.6" fill="#2fd32f"/><rect x="476.4" y="64.4" width="4.2" height="16.0" fill="#115011"/><rect x="477" y="64.4" width="3" height="15.6" fill="#2fd32f"/><rect x="480.4" y="63" width="4.2" height="17.4" fill="#5a5716"/><rect x="481" y="63" width="3" height="17" fill="#ede73c"/><rect x="484.4" y="64.4" width="4.2" height="16.0" fill="#115011"/><rect x="485" y="64.4" width="3" height="15.6" fill="#2fd32f"/><rect x="488.4" y="64" width="4.2" height="16.4" fill="#5a5716"/><rect x="489" y="64" width="3" height="16" fill="#ede73c"/><rect x="492.4" y="64" width="4.2" height="16.4" fill="#5a5716"/><rect x="493" y="64" width="3" height="16" fill="#ede73c"/><rect x="496.4" y="64.4" width="4.2" height="16.0" fill="#115011"/><rect x="497" y="64.4" width="3" height="15.6" fill="#2fd32f"/><rect x="500.4" y="63" width="4.2" height="17.4" fill="#5a5716"/><rect x="501" y="63" width="3" height="17" fill="#ede73c"/><rect x="504.4" y="64.4" width="4.2" height="16.0" fill="#115011"/><rect x="505" y="64.4" width="3" height="15.6" fill="#2fd32f"/><rect x="508.4" y="63" width="4.2" height="17.4" fill="#5a5716"/><rect x="509" y="63" width="3" height="17" fill="#ede73c"/><rect x="512.4" y="63" width="4.2" height="17.4" fill="#5a5716"/><rect x="513" y="63" width="3" height="17" fill="#ede73c"/><rect x="516.4" y="64.4" width="4.2" height="16.0" fill="#115011"/><rect x="517" y="64.4" width="3" height="15.6" fill="#2fd32f"/><rect x="520.4" y="64.4" width="4.2" height="16.0" fill="#115011"/><rect x="521" y="64.4" width="3" height="15.6" fill="#2fd32f"/><rect x="524.4" y="64.4" width="4.2" height="16.0" fill="#115011"/><rect x="525" y="64.4" width="3" height="15.6" fill="#2fd32f"/><rect x="528.4" y="64" width="4.2" height="16.4" fill="#5a5716"/><rect x="529" y="64" width="3" height="16" fill="#ede73c"/><rect x="532.4" y="64" width="4.2" height="16.4" fill="#5a5716"/><rect x="533" y="64" width="3" height="16" fill="#ede73c"/><rect x="536.4" y="64" width="4.2" height="16.4" fill="#5a5716"/><rect x="537" y="64" width="3" height="16" fill="#ede73c"/><rect x="540.4" y="63" width="4.2" height="17.4" fill="#5a5716"/><rect x="541" y="63" width="3" height="17" fill="#ede73c"/><rect x="544.4" y="65" width="4.2" height="15.4" fill="#115011"/><rect x="545" y="65" width="3" height="15" fill="#2fd32f"/><rect x="548.4" y="64.4" width="4.2" height="16.0" fill="#115011"/><rect x="549" y="64.4" width="3" height="15.6" fill="#2fd32f"/><rect x="552.4" y="64" width="4.2" height="16.4" fill="#5a5716"/><rect x="553" y="64" width="3" height="16" fill="#ede73c"/><rect x="556.4" y="64.4" width="4.2" height="16.0" fill="#115011"/><rect x="557" y="64.4" width="3" height="15.6" fill="#2fd32f"/><rect x="560.4" y="64" width="4.2" height="16.4" fill="#5a5716"/><rect x="561" y="64" width="3" height="16" fill="#ede73c"/><rect x="564.4" y="64" width="4.2" height="16.4" fill="#5a5716"/><rect x="565" y="64" width="3" height="16" fill="#ede73c"/><rect x="568.4" y="64" width="4.2" height="16.4" fill="#5a5716"/><rect x="569" y="64" width="3" height="16" fill="#ede73c"/><rect x="572.4" y="64" width="4.2" height="16.4" fill="#5a5716"/><rect x="573" y="64" width="3" height="16" fill="#ede73c"/><rect x="576.4" y="64.4" width="4.2" height="16.0" fill="#115011"/><rect x="577" y="64.4" width="3" height="15.6" fill="#2fd32f"/><rect x="580.4" y="64" width="4.2" height="16.4" fill="#5a5716"/><rect x="581" y="64" width="3" height="16" fill="#ede73c"/><rect x="584.4" y="64" width="4.2" height="16.4" fill="#5a5716"/><rect x="585" y="64" width="3" height="16" fill="#ede73c"/><rect x="588.4" y="64.4" width="4.2" height="16.0" fill="#115011"/><rect x="589" y="64.4" width="3" height="15.6" fill="#2fd32f"/><rect x="592.4" y="63" width="4.2" height="17.4" fill="#5a5716"/><rect x="593" y="63" width="3" height="17" fill="#ede73c"/><rect x="596.4" y="64.4" width="4.2" height="16.0" fill="#115011"/><rect x="597" y="64.4" width="3" height="15.6" fill="#2fd32f"/><rect x="600.4" y="63" width="4.2" height="17.4" fill="#5a5716"/><rect x="601" y="63" width="3" height="17" fill="#ede73c"/><rect x="604.4" y="64.4" width="4.2" height="16.0" fill="#115011"/><rect x="605" y="64.4" width="3" height="15.6" fill="#2fd32f"/><rect x="608.4" y="64" width="4.2" height="16.4" fill="#5a5716"/><rect x="609" y="64" width="3" height="16" fill="#ede73c"/><rect x="612.4" y="64" width="4.2" height="16.4" fill="#5a5716"/><rect x="613" y="64" width="3" height="16" fill="#ede73c"/><rect x="616.4" y="64.4" width="4.2" height="16.0" fill="#115011"/><rect x="617" y="64.4" width="3" height="15.6" fill="#2fd32f"/><rect x="620.4" y="63" width="4.2" height="17.4" fill="#5a5716"/><rect x="621" y="63" width="3" height="17" fill="#ede73c"/><rect x="624.4" y="63" width="4.2" height="17.4" fill="#5a5716"/><rect x="625" y="63" width="3" height="17" fill="#ede73c"/><rect x="628.4" y="64.4" width="4.2" height="16.0" fill="#115011"/><rect x="629" y="64.4" width="3" height="15.6" fill="#2fd32f"/><rect x="632.4" y="64" width="4.2" height="16.4" fill="#5a5716"/><rect x="633" y="64" width="3" height="16" fill="#ede73c"/><rect x="636.4" y="64.4" width="4.2" height="16.0" fill="#115011"/><rect x="637" y="64.4" width="3" height="15.6" fill="#2fd32f"/><rect x="640.4" y="64" width="4.2" height="16.4" fill="#5a5716"/><rect x="641" y="64" width="3" height="16" fill="#ede73c"/><rect x="644.4" y="64.4" width="4.2" height="16.0" fill="#115011"/><rect x="645" y="64.4" width="3" height="15.6" fill="#2fd32f"/><rect x="648.4" y="64" width="4.2" height="16.4" fill="#5a5716"/><rect x="649" y="64" width="3" height="16" fill="#ede73c"/><rect x="652.4" y="63" width="4.2" height="17.4" fill="#5a5716"/><rect x="653" y="63" width="3" height="17" fill="#ede73c"/><rect x="656.4" y="64.4" width="4.2" height="16.0" fill="#115011"/><rect x="657" y="64.4" width="3" height="15.6" fill="#2fd32f"/><rect x="660.4" y="63" width="4.2" height="17.4" fill="#5a5716"/><rect x="661" y="63" width="3" height="17" fill="#ede73c"/><rect x="664.4" y="64.4" width="4.2" height="16.0" fill="#115011"/><rect x="665" y="64.4" width="3" height="15.6" fill="#2fd32f"/><rect x="668.4" y="63" width="4.2" height="17.4" fill="#5a5716"/><rect x="669" y="63" width="3" height="17" fill="#ede73c"/><rect x="672.4" y="64.4" width="4.2" height="16.0" fill="#115011"/><rect x="673" y="64.4" width="3" height="15.6" fill="#2fd32f"/><rect x="676.4" y="63" width="4.2" height="17.4" fill="#5a5716"/><rect x="677" y="63" width="3" height="17" fill="#ede73c"/><rect x="680.4" y="64.4" width="4.2" height="16.0" fill="#115011"/><rect x="681" y="64.4" width="3" height="15.6" fill="#2fd32f"/><rect x="684.4" y="64" width="4.2" height="16.4" fill="#5a5716"/><rect x="685" y="64" width="3" height="16" fill="#ede73c"/><rect x="688.4" y="64.4" width="4.2" height="16.0" fill="#115011"/><rect x="689" y="64.4" width="3" height="15.6" fill="#2fd32f"/><rect x="692.4" y="64" width="4.2" height="16.4" fill="#5a5716"/><rect x="693" y="64" width="3" height="16" fill="#ede73c"/><rect x="696.4" y="64.4" width="4.2" height="16.0" fill="#115011"/><rect x="697" y="64.4" width="3" height="15.6" fill="#2fd32f"/><rect x="700.4" y="64" width="4.2" height="16.4" fill="#5a5716"/><rect x="701" y="64" width="3" height="16" fill="#ede73c"/><rect x="704.4" y="64" width="4.2" height="16.4" fill="#5a5716"/><rect x="705" y="64" width="3" height="16" fill="#ede73c"/><rect x="708.4" y="64" width="4.2" height="16.4" fill="#5a5716"/><rect x="709" y="64" width="3" height="16" fill="#ede73c"/><rect x="712.4" y="64" width="4.2" height="16.4" fill="#5a5716"/><rect x="713" y="64" width="3" height="16" fill="#ede73c"/><rect x="716.4" y="64.4" width="4.2" height="16.0" fill="#115011"/><rect x="717" y="64.4" width="3" height="15.6" fill="#2fd32f"/><rect x="720.4" y="63" width="4.2" height="17.4" fill="#5a5716"/><rect x="721" y="63" width="3" height="17" fill="#ede73c"/><rect x="724.4" y="64.4" width="4.2" height="16.0" fill="#115011"/><rect x="725" y="64.4" width="3" height="15.6" fill="#2fd32f"/><rect x="728.4" y="64" width="4.2" height="16.4" fill="#5a5716"/><rect x="729" y="64" width="3" height="16" fill="#ede73c"/><rect x="732.4" y="64" width="4.2" height="16.4" fill="#5a5716"/><rect x="733" y="64" width="3" height="16" fill="#ede73c"/><rect x="736.4" y="48" width="4.2" height="32.4" fill="#530e0e"/><rect x="737" y="48" width="3" height="32" fill="#dc2626"/><rect x="740.4" y="79" width="4.2" height="1.4" fill="#0f3652"/><rect x="741" y="79" width="3" height="1" fill="#2a8fd8"/><rect x="744.4" y="64" width="4.2" height="16.4" fill="#5a5716"/><rect x="745" y="64" width="3" height="16" fill="#ede73c"/><rect x="748.4" y="65" width="4.2" height="15.4" fill="#115011"/><rect x="749" y="65" width="3" height="15" fill="#2fd32f"/><rect x="752.4" y="64" width="4.2" height="16.4" fill="#5a5716"/><rect x="753" y="64" width="3" height="16" fill="#ede73c"/><rect x="756.4" y="64" width="4.2" height="16.4" fill="#5a5716"/><rect x="757" y="64" width="3" height="16" fill="#ede73c"/><rect x="760.4" y="62" width="4.2" height="18.4" fill="#5a5716"/><rect x="761" y="62" width="3" height="18" fill="#ede73c"/><rect x="764.4" y="66" width="4.2" height="14.4" fill="#115011"/><rect x="765" y="66" width="3" height="14" fill="#2fd32f"/><rect x="768.4" y="64" width="4.2" height="16.4" fill="#5a5716"/><rect x="769" y="64" width="3" height="16" fill="#ede73c"/><rect x="772.4" y="64" width="4.2" height="16.4" fill="#5a5716"/><rect x="773" y="64" width="3" height="16" fill="#ede73c"/><rect x="776.4" y="64.4" width="4.2" height="16.0" fill="#115011"/><rect x="777" y="64.4" width="3" height="15.6" fill="#2fd32f"/><rect x="780.4" y="64" width="4.2" height="16.4" fill="#5a5716"/><rect x="781" y="64" width="3" height="16" fill="#ede73c"/><rect x="784.4" y="64.4" width="4.2" height="16.0" fill="#115011"/><rect x="785" y="64.4" width="3" height="15.6" fill="#2fd32f"/><rect x="788.4" y="64" width="4.2" height="16.4" fill="#5a5716"/><rect x="789" y="64" width="3" height="16" fill="#ede73c"/><rect x="792.4" y="64" width="4.2" height="16.4" fill="#5a5716"/><rect x="793" y="64" width="3" height="16" fill="#ede73c"/><rect x="796.4" y="64" width="4.2" height="16.4" fill="#5a5716"/><rect x="797" y="64" width="3" height="16" fill="#ede73c"/><rect x="800.4" y="64.4" width="4.2" height="16.0" fill="#115011"/><rect x="801" y="64.4" width="3" height="15.6" fill="#2fd32f"/><rect x="804.4" y="63" width="4.2" height="17.4" fill="#5a5716"/><rect x="805" y="63" width="3" height="17" fill="#ede73c"/><rect x="808.4" y="48" width="4.2" height="32.4" fill="#5a5716"/><rect x="809" y="48" width="3" height="32" fill="#ede73c"/><rect x="812.4" y="63" width="4.2" height="17.4" fill="#5a5716"/><rect x="813" y="63" width="3" height="17" fill="#ede73c"/><rect x="816.4" y="79" width="4.2" height="1.4" fill="#0f3652"/><rect x="817" y="79" width="3" height="1" fill="#2a8fd8"/><rect x="820.4" y="59" width="4.2" height="21.4" fill="#5a5716"/><rect x="821" y="59" width="3" height="21" fill="#ede73c"/><rect x="824.4" y="68" width="4.2" height="12.4" fill="#115011"/><rect x="825" y="68" width="3" height="12" fill="#2fd32f"/><rect x="828.4" y="64.4" width="4.2" height="16.0" fill="#115011"/><rect x="829" y="64.4" width="3" height="15.6" fill="#2fd32f"/><rect x="832.4" y="64" width="4.2" height="16.4" fill="#5a5716"/><rect x="833" y="64" width="3" height="16" fill="#ede73c"/><rect x="836.4" y="64.4" width="4.2" height="16.0" fill="#115011"/><rect x="837" y="64.4" width="3" height="15.6" fill="#2fd32f"/><rect x="840.4" y="64" width="4.2" height="16.4" fill="#5a5716"/><rect x="841" y="64" width="3" height="16" fill="#ede73c"/><rect x="844.4" y="64" width="4.2" height="16.4" fill="#5a5716"/><rect x="845" y="64" width="3" height="16" fill="#ede73c"/><rect x="848.4" y="64.4" width="4.2" height="16.0" fill="#115011"/><rect x="849" y="64.4" width="3" height="15.6" fill="#2fd32f"/><rect x="852.4" y="64" width="4.2" height="16.4" fill="#5a5716"/><rect x="853" y="64" width="3" height="16" fill="#ede73c"/><rect x="856.4" y="63" width="4.2" height="17.4" fill="#5a5716"/><rect x="857" y="63" width="3" height="17" fill="#ede73c"/><rect x="860.4" y="64.4" width="4.2" height="16.0" fill="#115011"/><rect x="861" y="64.4" width="3" height="15.6" fill="#2fd32f"/><rect x="864.4" y="64" width="4.2" height="16.4" fill="#5a5716"/><rect x="865" y="64" width="3" height="16" fill="#ede73c"/><rect x="868.4" y="64" width="4.2" height="16.4" fill="#5a5716"/><rect x="869" y="64" width="3" height="16" fill="#ede73c"/><rect x="872.4" y="64.4" width="4.2" height="16.0" fill="#115011"/><rect x="873" y="64.4" width="3" height="15.6" fill="#2fd32f"/><rect x="876.4" y="64" width="4.2" height="16.4" fill="#5a5716"/><rect x="877" y="64" width="3" height="16" fill="#ede73c"/><rect x="880.4" y="64.4" width="4.2" height="16.0" fill="#115011"/><rect x="881" y="64.4" width="3" height="15.6" fill="#2fd32f"/><rect x="884.4" y="64" width="4.2" height="16.4" fill="#5a5716"/><rect x="885" y="64" width="3" height="16" fill="#ede73c"/><rect x="888.4" y="64" width="4.2" height="16.4" fill="#5a5716"/><rect x="889" y="64" width="3" height="16" fill="#ede73c"/><rect x="892.4" y="64.4" width="4.2" height="16.0" fill="#115011"/><rect x="893" y="64.4" width="3" height="15.6" fill="#2fd32f"/><rect x="896.4" y="64" width="4.2" height="16.4" fill="#5a5716"/><rect x="897" y="64" width="3" height="16" fill="#ede73c"/><rect x="900.4" y="64" width="4.2" height="16.4" fill="#5a5716"/><rect x="901" y="64" width="3" height="16" fill="#ede73c"/><rect x="904.4" y="64.4" width="4.2" height="16.0" fill="#115011"/><rect x="905" y="64.4" width="3" height="15.6" fill="#2fd32f"/><rect x="908.4" y="64" width="4.2" height="16.4" fill="#5a5716"/><rect x="909" y="64" width="3" height="16" fill="#ede73c"/><rect x="912.4" y="64" width="4.2" height="16.4" fill="#5a5716"/><rect x="913" y="64" width="3" height="16" fill="#ede73c"/><rect x="916.4" y="64.4" width="4.2" height="16.0" fill="#115011"/><rect x="917" y="64.4" width="3" height="15.6" fill="#2fd32f"/><rect x="920.4" y="64.4" width="4.2" height="16.0" fill="#115011"/><rect x="921" y="64.4" width="3" height="15.6" fill="#2fd32f"/><rect x="924.4" y="64" width="4.2" height="16.4" fill="#5a5716"/><rect x="925" y="64" width="3" height="16" fill="#ede73c"/><rect x="928.4" y="64.4" width="4.2" height="16.0" fill="#115011"/><rect x="929" y="64.4" width="3" height="15.6" fill="#2fd32f"/><rect x="932.4" y="64.4" width="4.2" height="16.0" fill="#115011"/><rect x="933" y="64.4" width="3" height="15.6" fill="#2fd32f"/><rect x="936.4" y="64.4" width="4.2" height="16.0" fill="#115011"/><rect x="937" y="64.4" width="3" height="15.6" fill="#2fd32f"/><rect x="940.4" y="63" width="4.2" height="17.4" fill="#5a5716"/><rect x="941" y="63" width="3" height="17" fill="#ede73c"/><rect x="944.4" y="64.4" width="4.2" height="16.0" fill="#115011"/><rect x="945" y="64.4" width="3" height="15.6" fill="#2fd32f"/><rect x="948.4" y="64.4" width="4.2" height="16.0" fill="#115011"/><rect x="949" y="64.4" width="3" height="15.6" fill="#2fd32f"/><rect x="952.4" y="63" width="4.2" height="17.4" fill="#5a5716"/><rect x="953" y="63" width="3" height="17" fill="#ede73c"/><rect x="956.4" y="64.4" width="4.2" height="16.0" fill="#115011"/><rect x="957" y="64.4" width="3" height="15.6" fill="#2fd32f"/><rect x="960.4" y="64" width="4.2" height="16.4" fill="#5a5716"/><rect x="961" y="64" width="3" height="16" fill="#ede73c"/><rect x="964.4" y="63" width="4.2" height="17.4" fill="#5a5716"/><rect x="965" y="63" width="3" height="17" fill="#ede73c"/><rect x="968.4" y="64.4" width="4.2" height="16.0" fill="#115011"/><rect x="969" y="64.4" width="3" height="15.6" fill="#2fd32f"/><rect x="972.4" y="64.4" width="4.2" height="16.0" fill="#115011"/><rect x="973" y="64.4" width="3" height="15.6" fill="#2fd32f"/><rect x="976.4" y="63" width="4.2" height="17.4" fill="#5a5716"/><rect x="977" y="63" width="3" height="17" fill="#ede73c"/><rect x="980.4" y="64.4" width="4.2" height="16.0" fill="#115011"/><rect x="981" y="64.4" width="3" height="15.6" fill="#2fd32f"/><rect x="984.4" y="64.4" width="4.2" height="16.0" fill="#115011"/><rect x="985" y="64.4" width="3" height="15.6" fill="#2fd32f"/><rect x="988.4" y="64" width="4.2" height="16.4" fill="#5a5716"/><rect x="989" y="64" width="3" height="16" fill="#ede73c"/><rect x="992.4" y="64.4" width="4.2" height="16.0" fill="#115011"/><rect x="993" y="64.4" width="3" height="15.6" fill="#2fd32f"/><rect x="996.4" y="64.4" width="4.2" height="16.0" fill="#115011"/><rect x="997" y="64.4" width="3" height="15.6" fill="#2fd32f"/><rect x="1000.4" y="64" width="4.2" height="16.4" fill="#5a5716"/><rect x="1001" y="64" width="3" height="16" fill="#ede73c"/><rect x="1004.4" y="64.4" width="4.2" height="16.0" fill="#115011"/><rect x="1005" y="64.4" width="3" height="15.6" fill="#2fd32f"/><rect x="1008.4" y="64.4" width="4.2" height="16.0" fill="#115011"/><rect x="1009" y="64.4" width="3" height="15.6" fill="#2fd32f"/><rect x="1012.4" y="64" width="4.2" height="16.4" fill="#5a5716"/><rect x="1013" y="64" width="3" height="16" fill="#ede73c"/><rect x="1016.4" y="64.4" width="4.2" height="16.0" fill="#115011"/><rect x="1017" y="64.4" width="3" height="15.6" fill="#2fd32f"/><rect x="1020.4" y="64" width="4.2" height="16.4" fill="#5a5716"/><rect x="1021" y="64" width="3" height="16" fill="#ede73c"/><rect x="1024.4" y="64" width="4.2" height="16.4" fill="#5a5716"/><rect x="1025" y="64" width="3" height="16" fill="#ede73c"/><rect x="1028.4" y="64.4" width="4.2" height="16.0" fill="#115011"/><rect x="1029" y="64.4" width="3" height="15.6" fill="#2fd32f"/><rect x="1032.4" y="64" width="4.2" height="16.4" fill="#5a5716"/><rect x="1033" y="64" width="3" height="16" fill="#ede73c"/><rect x="1036.4" y="64" width="4.2" height="16.4" fill="#5a5716"/><rect x="1037" y="64" width="3" height="16" fill="#ede73c"/><rect x="1040.4" y="64.4" width="4.2" height="16.0" fill="#115011"/><rect x="1041" y="64.4" width="3" height="15.6" fill="#2fd32f"/><rect x="1044.4" y="64.4" width="4.2" height="16.0" fill="#115011"/><rect x="1045" y="64.4" width="3" height="15.6" fill="#2fd32f"/><rect x="1048.4" y="64" width="4.2" height="16.4" fill="#5a5716"/><rect x="1049" y="64" width="3" height="16" fill="#ede73c"/><rect x="1052.4" y="63" width="4.2" height="17.4" fill="#5a5716"/><rect x="1053" y="63" width="3" height="17" fill="#ede73c"/><rect x="1056.4" y="64.4" width="4.2" height="16.0" fill="#115011"/><rect x="1057" y="64.4" width="3" height="15.6" fill="#2fd32f"/><rect x="1060.4" y="64" width="4.2" height="16.4" fill="#5a5716"/><rect x="1061" y="64" width="3" height="16" fill="#ede73c"/><rect x="1064.4" y="64.4" width="4.2" height="16.0" fill="#115011"/><rect x="1065" y="64.4" width="3" height="15.6" fill="#2fd32f"/><rect x="1068.4" y="64.4" width="4.2" height="16.0" fill="#115011"/><rect x="1069" y="64.4" width="3" height="15.6" fill="#2fd32f"/><rect x="1072.4" y="64" width="4.2" height="16.4" fill="#5a5716"/><rect x="1073" y="64" width="3" height="16" fill="#ede73c"/><rect x="1076.4" y="64" width="4.2" height="16.4" fill="#5a5716"/><rect x="1077" y="64" width="3" height="16" fill="#ede73c"/><rect x="1080.4" y="64.4" width="4.2" height="16.0" fill="#115011"/><rect x="1081" y="64.4" width="3" height="15.6" fill="#2fd32f"/><rect x="1084.4" y="64" width="4.2" height="16.4" fill="#5a5716"/><rect x="1085" y="64" width="3" height="16" fill="#ede73c"/><rect x="1088.4" y="64.4" width="4.2" height="16.0" fill="#115011"/><rect x="1089" y="64.4" width="3" height="15.6" fill="#2fd32f"/><rect x="1092.4" y="64.4" width="4.2" height="16.0" fill="#115011"/><rect x="1093" y="64.4" width="3" height="15.6" fill="#2fd32f"/><rect x="1096.4" y="64" width="4.2" height="16.4" fill="#5a5716"/><rect x="1097" y="64" width="3" height="16" fill="#ede73c"/><rect x="1100.4" y="64" width="4.2" height="16.4" fill="#5a5716"/><rect x="1101" y="64" width="3" height="16" fill="#ede73c"/><rect x="1104.4" y="64" width="4.2" height="16.4" fill="#5a5716"/><rect x="1105" y="64" width="3" height="16" fill="#ede73c"/><rect x="1108.4" y="64.4" width="4.2" height="16.0" fill="#115011"/><rect x="1109" y="64.4" width="3" height="15.6" fill="#2fd32f"/><rect x="1112.4" y="64" width="4.2" height="16.4" fill="#5a5716"/><rect x="1113" y="64" width="3" height="16" fill="#ede73c"/><rect x="1116.4" y="64.4" width="4.2" height="16.0" fill="#115011"/><rect x="1117" y="64.4" width="3" height="15.6" fill="#2fd32f"/><rect x="1120.4" y="64.4" width="4.2" height="16.0" fill="#115011"/><rect x="1121" y="64.4" width="3" height="15.6" fill="#2fd32f"/><rect x="1124.4" y="64.4" width="4.2" height="16.0" fill="#115011"/><rect x="1125" y="64.4" width="3" height="15.6" fill="#2fd32f"/><rect x="1128.4" y="64.4" width="4.2" height="16.0" fill="#115011"/><rect x="1129" y="64.4" width="3" height="15.6" fill="#2fd32f"/><rect x="1132.4" y="64" width="4.2" height="16.4" fill="#5a5716"/><rect x="1133" y="64" width="3" height="16" fill="#ede73c"/><rect x="1136.4" y="64" width="4.2" height="16.4" fill="#5a5716"/><rect x="1137" y="64" width="3" height="16" fill="#ede73c"/><rect x="1140.4" y="63" width="4.2" height="17.4" fill="#5a5716"/><rect x="1141" y="63" width="3" height="17" fill="#ede73c"/><rect x="1144.4" y="64.4" width="4.2" height="16.0" fill="#115011"/><rect x="1145" y="64.4" width="3" height="15.6" fill="#2fd32f"/><rect x="1148.4" y="64" width="4.2" height="16.4" fill="#5a5716"/><rect x="1149" y="64" width="3" height="16" fill="#ede73c"/><rect x="1152.4" y="64.4" width="4.2" height="16.0" fill="#115011"/><rect x="1153" y="64.4" width="3" height="15.6" fill="#2fd32f"/><rect x="1156.4" y="64.4" width="4.2" height="16.0" fill="#115011"/><rect x="1157" y="64.4" width="3" height="15.6" fill="#2fd32f"/><rect x="1160.4" y="64" width="4.2" height="16.4" fill="#5a5716"/><rect x="1161" y="64" width="3" height="16" fill="#ede73c"/><rect x="1164.4" y="64.4" width="4.2" height="16.0" fill="#115011"/><rect x="1165" y="64.4" width="3" height="15.6" fill="#2fd32f"/><rect x="1168.4" y="64" width="4.2" height="16.4" fill="#5a5716"/><rect x="1169" y="64" width="3" height="16" fill="#ede73c"/><rect x="1172.4" y="64.4" width="4.2" height="16.0" fill="#115011"/><rect x="1173" y="64.4" width="3" height="15.6" fill="#2fd32f"/><rect x="1176.4" y="63" width="4.2" height="17.4" fill="#5a5716"/><rect x="1177" y="63" width="3" height="17" fill="#ede73c"/><rect x="1180.4" y="33" width="4.2" height="47.4" fill="#530e0e"/><rect x="1181" y="33" width="3" height="47" fill="#dc2626"/><rect x="1184.4" y="79" width="4.2" height="1.4" fill="#0f3652"/><rect x="1185" y="79" width="3" height="1" fill="#2a8fd8"/><rect x="1188.4" y="64.4" width="4.2" height="16.0" fill="#115011"/><rect x="1189" y="64.4" width="3" height="15.6" fill="#2fd32f"/><rect x="1192.4" y="64.4" width="4.2" height="16.0" fill="#115011"/><rect x="1193" y="64.4" width="3" height="15.6" fill="#2fd32f"/><rect x="1196.4" y="64.4" width="4.2" height="16.0" fill="#115011"/><rect x="1197" y="64.4" width="3" height="15.6" fill="#2fd32f"/><rect x="1200.4" y="63" width="4.2" height="17.4" fill="#5a5716"/><rect x="1201" y="63" width="3" height="17" fill="#ede73c"/><rect x="1204.4" y="64.4" width="4.2" height="16.0" fill="#115011"/><rect x="1205" y="64.4" width="3" height="15.6" fill="#2fd32f"/><rect x="1208.4" y="64" width="4.2" height="16.4" fill="#5a5716"/><rect x="1209" y="64" width="3" height="16" fill="#ede73c"/><rect x="1212.4" y="64" width="4.2" height="16.4" fill="#5a5716"/><rect x="1213" y="64" width="3" height="16" fill="#ede73c"/><rect x="1216.4" y="63" width="4.2" height="17.4" fill="#5a5716"/><rect x="1217" y="63" width="3" height="17" fill="#ede73c"/><rect x="1220.4" y="65" width="4.2" height="15.4" fill="#115011"/><rect x="1221" y="65" width="3" height="15" fill="#2fd32f"/><rect x="1224.4" y="63" width="4.2" height="17.4" fill="#5a5716"/><rect x="1225" y="63" width="3" height="17" fill="#ede73c"/><rect x="1228.4" y="64.4" width="4.2" height="16.0" fill="#115011"/><rect x="1229" y="64.4" width="3" height="15.6" fill="#2fd32f"/><rect x="1232.4" y="64.4" width="4.2" height="16.0" fill="#115011"/><rect x="1233" y="64.4" width="3" height="15.6" fill="#2fd32f"/><rect x="1236.4" y="64" width="4.2" height="16.4" fill="#5a5716"/><rect x="1237" y="64" width="3" height="16" fill="#ede73c"/><rect x="1240.4" y="64.4" width="4.2" height="16.0" fill="#115011"/><rect x="1241" y="64.4" width="3" height="15.6" fill="#2fd32f"/><rect x="1244.4" y="64" width="4.2" height="16.4" fill="#5a5716"/><rect x="1245" y="64" width="3" height="16" fill="#ede73c"/><rect x="1248.4" y="63" width="4.2" height="17.4" fill="#5a5716"/><rect x="1249" y="63" width="3" height="17" fill="#ede73c"/><rect x="1252.4" y="64.4" width="4.2" height="16.0" fill="#314030"/><rect x="1253" y="64.4" width="3" height="15.6" fill="#82a97f"/><rect x="1256.4" y="64.4" width="4.2" height="16.0" fill="#314030"/><rect x="1257" y="64.4" width="3" height="15.6" fill="#82a97f"/><rect x="1260.4" y="63" width="4.2" height="17.4" fill="#583f2d"/><rect x="1261" y="63" width="3" height="17" fill="#eaa878"/><rect x="1264.4" y="79" width="4.2" height="1.4" fill="#0f3652"/><rect x="1265" y="79" width="3" height="1" fill="#2a8fd8"/><rect x="5" y="64" width="1267" height="1" fill="#8a8a3c" opacity=".18"/><rect x="5" y="73" width="1267" height="1" fill="#3c8a3c" opacity=".16"/></svg>
<svg style="left:0px;top:0px;" width="1276" height="100" viewBox="0 0 1276 100"><rect x="4.20" y="86" width="1.2" height="8" fill="#6e6f6a"/><rect x="29.85" y="86" width="1.2" height="4" fill="#6e6f6a"/><rect x="55.50" y="86" width="1.2" height="4" fill="#6e6f6a"/><rect x="81.15" y="86" width="1.2" height="4" fill="#6e6f6a"/><rect x="106.80" y="86" width="1.2" height="4" fill="#6e6f6a"/><rect x="132.45" y="86" width="1.2" height="6" fill="#6e6f6a"/><rect x="158.10" y="86" width="1.2" height="4" fill="#6e6f6a"/><rect x="183.75" y="86" width="1.2" height="4" fill="#6e6f6a"/><rect x="209.40" y="86" width="1.2" height="4" fill="#6e6f6a"/><rect x="235.05" y="86" width="1.2" height="4" fill="#6e6f6a"/><rect x="260.70" y="86" width="1.2" height="8" fill="#6e6f6a"/><rect x="286.35" y="86" width="1.2" height="4" fill="#6e6f6a"/><rect x="312.00" y="86" width="1.2" height="4" fill="#6e6f6a"/><rect x="337.65" y="86" width="1.2" height="4" fill="#6e6f6a"/><rect x="363.30" y="86" width="1.2" height="4" fill="#6e6f6a"/><rect x="388.95" y="86" width="1.2" height="6" fill="#6e6f6a"/><rect x="414.60" y="86" width="1.2" height="4" fill="#6e6f6a"/><rect x="440.25" y="86" width="1.2" height="4" fill="#6e6f6a"/><rect x="465.90" y="86" width="1.2" height="4" fill="#6e6f6a"/><rect x="491.55" y="86" width="1.2" height="4" fill="#6e6f6a"/><rect x="517.20" y="86" width="1.2" height="8" fill="#6e6f6a"/><rect x="542.85" y="86" width="1.2" height="4" fill="#6e6f6a"/><rect x="568.50" y="86" width="1.2" height="4" fill="#6e6f6a"/><rect x="594.15" y="86" width="1.2" height="4" fill="#6e6f6a"/><rect x="619.80" y="86" width="1.2" height="4" fill="#6e6f6a"/><rect x="645.45" y="86" width="1.2" height="6" fill="#6e6f6a"/><rect x="671.10" y="86" width="1.2" height="4" fill="#6e6f6a"/><rect x="696.75" y="86" width="1.2" height="4" fill="#6e6f6a"/><rect x="722.40" y="86" width="1.2" height="4" fill="#6e6f6a"/><rect x="748.05" y="86" width="1.2" height="4" fill="#6e6f6a"/><rect x="773.70" y="86" width="1.2" height="8" fill="#6e6f6a"/><rect x="799.35" y="86" width="1.2" height="4" fill="#6e6f6a"/><rect x="825.00" y="86" width="1.2" height="4" fill="#6e6f6a"/><rect x="850.65" y="86" width="1.2" height="4" fill="#6e6f6a"/><rect x="876.30" y="86" width="1.2" height="4" fill="#6e6f6a"/><rect x="901.95" y="86" width="1.2" height="6" fill="#6e6f6a"/><rect x="927.60" y="86" width="1.2" height="4" fill="#6e6f6a"/><rect x="953.25" y="86" width="1.2" height="4" fill="#6e6f6a"/><rect x="978.90" y="86" width="1.2" height="4" fill="#6e6f6a"/><rect x="1004.55" y="86" width="1.2" height="4" fill="#6e6f6a"/><rect x="1030.20" y="86" width="1.2" height="8" fill="#6e6f6a"/><rect x="1055.85" y="86" width="1.2" height="4" fill="#6e6f6a"/><rect x="1081.50" y="86" width="1.2" height="4" fill="#6e6f6a"/><rect x="1107.15" y="86" width="1.2" height="4" fill="#6e6f6a"/><rect x="1132.80" y="86" width="1.2" height="4" fill="#6e6f6a"/><rect x="1158.45" y="86" width="1.2" height="6" fill="#6e6f6a"/><rect x="1184.10" y="86" width="1.2" height="4" fill="#6e6f6a"/><rect x="1209.75" y="86" width="1.2" height="4" fill="#6e6f6a"/><rect x="1235.40" y="86" width="1.2" height="4" fill="#6e6f6a"/><rect x="1261.05" y="86" width="1.2" height="4" fill="#6e6f6a"/></svg>
<span class="t" style="left:261.5px;top:92.50px;color:#858581;font-size:13px;letter-spacing:-0.477px;-webkit-text-stroke:.1px;">10 ms</span>
<span class="t" style="left:517.8px;top:92.50px;color:#858581;font-size:13px;letter-spacing:-0.452px;-webkit-text-stroke:.1px;">20 ms</span>
<span class="t" style="left:774.3px;top:92.50px;color:#858581;font-size:13px;letter-spacing:-0.427px;-webkit-text-stroke:.1px;">30 ms</span>
<span class="t" style="left:1030.8px;top:92.50px;color:#858581;font-size:13px;letter-spacing:-0.427px;-webkit-text-stroke:.1px;">40 ms</span>
<div style="left:5px;top:119px;width:1251px;height:1px;background:#fff;"></div>
<div style="left:420px;top:113px;width:2px;height:13px;background:#cfcfcb;"></div>
<div style="left:424px;top:113px;width:2px;height:13px;background:#cfcfcb;"></div>
<div style="left:814px;top:113px;width:2px;height:13px;background:#cfcfcb;"></div>
<div style="left:818px;top:113px;width:2px;height:13px;background:#cfcfcb;"></div>
<svg style="left:0px;top:0px;" width="1276" height="130" viewBox="0 0 1276 130"><rect x="1254.7" y="113" width="1.6" height="13" fill="#fff"/></svg>
<div style="left:4px;top:113px;width:1px;height:13px;background:#fff;"></div>
<div style="left:154px;top:117px;width:119px;height:5px;background:#21231c;"></div>
<span class="t" style="left:155px;top:111.00px;color:#fff;font-size:13px;letter-spacing:-0.243px;">Frame 900 (16.3 ms)</span>
<div style="left:556px;top:117px;width:126px;height:5px;background:#21231c;"></div>
<span class="t" style="left:557px;top:111.00px;color:#fff;font-size:13px;letter-spacing:-0.243px;">Frame 901 (15.35 ms)</span>
<div style="left:973px;top:117px;width:126px;height:5px;background:#21231c;"></div>
<span class="t" style="left:974px;top:111.00px;color:#fff;font-size:13px;letter-spacing:-0.243px;">Frame 902 (17.22 ms)</span>
<div style="left:422px;top:119px;width:2px;height:1px;background:#21231c;"></div>
<div style="left:816px;top:119px;width:2px;height:1px;background:#21231c;"></div>
<div style="left:5px;top:144px;width:1251px;height:1px;background:#3d3e3a;"></div>
<svg style="left:6px;top:132px;" width="8" height="8" viewBox="0 0 8 8"><path d="M0 1.5h8L4 7z" fill="#fff"/></svg>
<span class="t" style="left:20.8px;top:129.00px;color:#fff;font-size:13px;letter-spacing:0.054px;">Main thread</span>
<svg style="left:418px;top:149px;" width="12" height="6" viewBox="0 0 12 6"><path d="M0.3 3.4q0.9-2.6 1.8-0.6t1.8 0.6q0.9-2.6 1.8-0.6t1.8 0.6q0.9-2.6 1.8-0.6t1.8 0.6" fill="none" stroke="#9598ad" stroke-width="1"/></svg>
<svg style="left:813px;top:149px;" width="10" height="6" viewBox="0 0 10 6"><path d="M0.3 3.4q0.9-2.6 1.8-0.6t1.8 0.6q0.9-2.6 1.8-0.6t1.8 0.6" fill="none" stroke="#9598ad" stroke-width="1"/></svg>
<div style="left:5px;top:158px;width:417px;height:15px;background:#5fa77c;box-shadow:inset 1px 1px 0 rgba(255,255,255,.16),inset -1px -1px 0 rgba(0,0,0,.14);border-bottom:1px solid rgba(0,0,0,.35);box-sizing:content-box"></div>
<span class="t" style="left:161.8px;top:158.00px;color:#fff;font-size:13px;letter-spacing:-0.436px;text-shadow:1px 1px 0 rgba(0,0,0,.9);">OS_LinuxBSD::run</span>
<div style="left:5px;top:174px;width:417px;height:15px;background:#5da37a;box-shadow:inset 1px 1px 0 rgba(255,255,255,.16),inset -1px -1px 0 rgba(0,0,0,.14);border-bottom:1px solid rgba(0,0,0,.35);box-sizing:content-box"></div>
<span class="t" style="left:171.2px;top:174.00px;color:#fff;font-size:13px;letter-spacing:0.210px;text-shadow:1px 1px 0 rgba(0,0,0,.9);">Main::iteration</span>
<div style="left:5px;top:190px;width:413px;height:15px;background:#569b72;box-shadow:inset 1px 1px 0 rgba(255,255,255,.16),inset -1px -1px 0 rgba(0,0,0,.14);border-bottom:1px solid rgba(0,0,0,.35);box-sizing:content-box"></div>
<span class="t" style="left:144.5px;top:190.00px;color:#fff;font-size:13px;letter-spacing:0.016px;text-shadow:1px 1px 0 rgba(0,0,0,.9);">RenderingServer::draw</span>
<div style="left:418px;top:190px;width:4px;height:15px;background:#569b72;box-shadow:inset 1px 1px 0 rgba(255,255,255,.16),inset -1px -1px 0 rgba(0,0,0,.14);border-bottom:1px solid rgba(0,0,0,.35);box-sizing:content-box"></div>
<div style="left:7px;top:206px;width:411px;height:15px;background:#4f946b;box-shadow:inset 1px 1px 0 rgba(255,255,255,.16),inset -1px -1px 0 rgba(0,0,0,.14);border-bottom:1px solid rgba(0,0,0,.35);box-sizing:content-box"></div>
<span class="t" style="left:136.5px;top:206.00px;color:#fff;font-size:13px;letter-spacing:0.058px;text-shadow:1px 1px 0 rgba(0,0,0,.9);">viewport-&gt;draw_viewports</span>
<div style="left:418px;top:206px;width:4px;height:15px;background:#4f946b;box-shadow:inset 1px 1px 0 rgba(255,255,255,.16),inset -1px -1px 0 rgba(0,0,0,.14);border-bottom:1px solid rgba(0,0,0,.35);box-sizing:content-box"></div>
<div style="left:7px;top:222px;width:411px;height:15px;background:#4a8e66;box-shadow:inset 1px 1px 0 rgba(255,255,255,.16),inset -1px -1px 0 rgba(0,0,0,.14);border-bottom:1px solid rgba(0,0,0,.35);box-sizing:content-box"></div>
<span class="t" style="left:163.2px;top:222.00px;color:#fff;font-size:13px;letter-spacing:0.166px;text-shadow:1px 1px 0 rgba(0,0,0,.9);">render viewports</span>
<div style="left:418px;top:222px;width:4px;height:15px;background:#4a8e66;box-shadow:inset 1px 1px 0 rgba(255,255,255,.16),inset -1px -1px 0 rgba(0,0,0,.14);border-bottom:1px solid rgba(0,0,0,.35);box-sizing:content-box"></div>
<div style="left:5px;top:238px;width:3px;height:15px;background:#448860;box-shadow:inset 1px 1px 0 rgba(255,255,255,.16),inset -1px -1px 0 rgba(0,0,0,.14);border-bottom:1px solid rgba(0,0,0,.35);box-sizing:content-box"></div>
<div style="left:8px;top:238px;width:410px;height:15px;background:#448860;box-shadow:inset 1px 1px 0 rgba(255,255,255,.16),inset -1px -1px 0 rgba(0,0,0,.14);border-bottom:1px solid rgba(0,0,0,.35);box-sizing:content-box"></div>
<span class="t" style="left:168.0px;top:238.00px;color:#fff;font-size:13px;letter-spacing:0.242px;text-shadow:1px 1px 0 rgba(0,0,0,.9);">render viewport</span>
<div style="left:422px;top:158px;width:394px;height:15px;background:#5fa77c;box-shadow:inset 1px 1px 0 rgba(255,255,255,.16),inset -1px -1px 0 rgba(0,0,0,.14);border-bottom:1px solid rgba(0,0,0,.35);box-sizing:content-box"></div>
<span class="t" style="left:567.4px;top:158.00px;color:#fff;font-size:13px;letter-spacing:-0.443px;text-shadow:1px 1px 0 rgba(0,0,0,.9);">OS_LinuxBSD::run</span>
<div style="left:422px;top:174px;width:394px;height:15px;background:#5da37a;box-shadow:inset 1px 1px 0 rgba(255,255,255,.16),inset -1px -1px 0 rgba(0,0,0,.14);border-bottom:1px solid rgba(0,0,0,.35);box-sizing:content-box"></div>
<span class="t" style="left:576.8px;top:174.00px;color:#fff;font-size:13px;letter-spacing:0.196px;text-shadow:1px 1px 0 rgba(0,0,0,.9);">Main::iteration</span>
<div style="left:422px;top:190px;width:390.5px;height:15px;background:#569b72;box-shadow:inset 1px 1px 0 rgba(255,255,255,.16),inset -1px -1px 0 rgba(0,0,0,.14);border-bottom:1px solid rgba(0,0,0,.35);box-sizing:content-box"></div>
<span class="t" style="left:551.0px;top:190.00px;color:#fff;font-size:13px;letter-spacing:0.016px;text-shadow:1px 1px 0 rgba(0,0,0,.9);">RenderingServer::draw</span>
<div style="left:812.5px;top:190px;width:3.5px;height:15px;background:#569b72;box-shadow:inset 1px 1px 0 rgba(255,255,255,.16),inset -1px -1px 0 rgba(0,0,0,.14);border-bottom:1px solid rgba(0,0,0,.35);box-sizing:content-box"></div>
<div style="left:424.5px;top:206px;width:388.0px;height:15px;background:#4f946b;box-shadow:inset 1px 1px 0 rgba(255,255,255,.16),inset -1px -1px 0 rgba(0,0,0,.14);border-bottom:1px solid rgba(0,0,0,.35);box-sizing:content-box"></div>
<span class="t" style="left:542.5px;top:206.00px;color:#fff;font-size:13px;letter-spacing:0.058px;text-shadow:1px 1px 0 rgba(0,0,0,.9);">viewport-&gt;draw_viewports</span>
<div style="left:812.5px;top:206px;width:3.5px;height:15px;background:#4f946b;box-shadow:inset 1px 1px 0 rgba(255,255,255,.16),inset -1px -1px 0 rgba(0,0,0,.14);border-bottom:1px solid rgba(0,0,0,.35);box-sizing:content-box"></div>
<div style="left:424.5px;top:222px;width:388.0px;height:15px;background:#4a8e66;box-shadow:inset 1px 1px 0 rgba(255,255,255,.16),inset -1px -1px 0 rgba(0,0,0,.14);border-bottom:1px solid rgba(0,0,0,.35);box-sizing:content-box"></div>
<span class="t" style="left:569.2px;top:222.00px;color:#fff;font-size:13px;letter-spacing:0.166px;text-shadow:1px 1px 0 rgba(0,0,0,.9);">render viewports</span>
<div style="left:812.5px;top:222px;width:3.5px;height:15px;background:#4a8e66;box-shadow:inset 1px 1px 0 rgba(255,255,255,.16),inset -1px -1px 0 rgba(0,0,0,.14);border-bottom:1px solid rgba(0,0,0,.35);box-sizing:content-box"></div>
<div style="left:424.7px;top:238px;width:3.6000000000000227px;height:15px;background:#448860;box-shadow:inset 1px 1px 0 rgba(255,255,255,.16),inset -1px -1px 0 rgba(0,0,0,.14);border-bottom:1px solid rgba(0,0,0,.35);box-sizing:content-box"></div>
<div style="left:428.3px;top:238px;width:384.2px;height:15px;background:#448860;box-shadow:inset 1px 1px 0 rgba(255,255,255,.16),inset -1px -1px 0 rgba(0,0,0,.14);border-bottom:1px solid rgba(0,0,0,.35);box-sizing:content-box"></div>
<span class="t" style="left:574.0px;top:238.00px;color:#fff;font-size:13px;letter-spacing:0.242px;text-shadow:1px 1px 0 rgba(0,0,0,.9);">render viewport</span>
<div style="left:816px;top:158px;width:440px;height:15px;background:#5fa77c;box-shadow:inset 1px 1px 0 rgba(255,255,255,.16),inset -1px -1px 0 rgba(0,0,0,.14);border-bottom:1px solid rgba(0,0,0,.35);box-sizing:content-box"></div>
<span class="t" style="left:983.9px;top:158.00px;color:#fff;font-size:13px;letter-spacing:-0.436px;text-shadow:1px 1px 0 rgba(0,0,0,.9);">OS_LinuxBSD::run</span>
<div style="left:816px;top:174px;width:440px;height:15px;background:#5da37a;box-shadow:inset 1px 1px 0 rgba(255,255,255,.16),inset -1px -1px 0 rgba(0,0,0,.14);border-bottom:1px solid rgba(0,0,0,.35);box-sizing:content-box"></div>
<span class="t" style="left:993.2px;top:174.00px;color:#fff;font-size:13px;letter-spacing:0.210px;text-shadow:1px 1px 0 rgba(0,0,0,.9);">Main::iteration</span>
<div style="left:816px;top:190px;width:436px;height:15px;background:#569b72;box-shadow:inset 1px 1px 0 rgba(255,255,255,.16),inset -1px -1px 0 rgba(0,0,0,.14);border-bottom:1px solid rgba(0,0,0,.35);box-sizing:content-box"></div>
<span class="t" style="left:967.0px;top:190.00px;color:#fff;font-size:13px;letter-spacing:0.016px;text-shadow:1px 1px 0 rgba(0,0,0,.9);">RenderingServer::draw</span>
<div style="left:1252px;top:190px;width:4px;height:15px;background:#569b72;box-shadow:inset 1px 1px 0 rgba(255,255,255,.16),inset -1px -1px 0 rgba(0,0,0,.14);border-bottom:1px solid rgba(0,0,0,.35);box-sizing:content-box"></div>
<div style="left:818px;top:206px;width:434px;height:15px;background:#4f946b;box-shadow:inset 1px 1px 0 rgba(255,255,255,.16),inset -1px -1px 0 rgba(0,0,0,.14);border-bottom:1px solid rgba(0,0,0,.35);box-sizing:content-box"></div>
<span class="t" style="left:959.0px;top:206.00px;color:#fff;font-size:13px;letter-spacing:0.058px;text-shadow:1px 1px 0 rgba(0,0,0,.9);">viewport-&gt;draw_viewports</span>
<div style="left:1252px;top:206px;width:4px;height:15px;background:#4f946b;box-shadow:inset 1px 1px 0 rgba(255,255,255,.16),inset -1px -1px 0 rgba(0,0,0,.14);border-bottom:1px solid rgba(0,0,0,.35);box-sizing:content-box"></div>
<div style="left:818px;top:222px;width:434px;height:15px;background:#4a8e66;box-shadow:inset 1px 1px 0 rgba(255,255,255,.16),inset -1px -1px 0 rgba(0,0,0,.14);border-bottom:1px solid rgba(0,0,0,.35);box-sizing:content-box"></div>
<span class="t" style="left:985.8px;top:222.00px;color:#fff;font-size:13px;letter-spacing:0.153px;text-shadow:1px 1px 0 rgba(0,0,0,.9);">render viewports</span>
<div style="left:1252px;top:222px;width:4px;height:15px;background:#4a8e66;box-shadow:inset 1px 1px 0 rgba(255,255,255,.16),inset -1px -1px 0 rgba(0,0,0,.14);border-bottom:1px solid rgba(0,0,0,.35);box-sizing:content-box"></div>
<div style="left:818.6px;top:238px;width:3.0px;height:15px;background:#448860;box-shadow:inset 1px 1px 0 rgba(255,255,255,.16),inset -1px -1px 0 rgba(0,0,0,.14);border-bottom:1px solid rgba(0,0,0,.35);box-sizing:content-box"></div>
<div style="left:821.6px;top:238px;width:430.4px;height:15px;background:#448860;box-shadow:inset 1px 1px 0 rgba(255,255,255,.16),inset -1px -1px 0 rgba(0,0,0,.14);border-bottom:1px solid rgba(0,0,0,.35);box-sizing:content-box"></div>
<span class="t" style="left:990.5px;top:238.00px;color:#fff;font-size:13px;letter-spacing:0.242px;text-shadow:1px 1px 0 rgba(0,0,0,.9);">render viewport</span>
<span class="t" style="left:419px;top:190.00px;color:#fff;font-size:13px;letter-spacing:0.000px;text-shadow:1px 1px 0 rgba(0,0,0,.9);width:3px;overflow:hidden;">a</span>
<span class="t" style="left:1253px;top:190.00px;color:#fff;font-size:13px;letter-spacing:0.000px;text-shadow:1px 1px 0 rgba(0,0,0,.9);width:3px;overflow:hidden;">a</span>
<span class="t" style="left:5px;top:238.00px;color:#fff;font-size:13px;letter-spacing:0.000px;text-shadow:1px 1px 0 rgba(0,0,0,.9);width:3px;overflow:hidden;">r</span>
<span class="t" style="left:425.5px;top:238.00px;color:#fff;font-size:13px;letter-spacing:0.000px;text-shadow:1px 1px 0 rgba(0,0,0,.9);width:3px;overflow:hidden;">r</span>
<span class="t" style="left:819px;top:238.00px;color:#fff;font-size:13px;letter-spacing:0.000px;text-shadow:1px 1px 0 rgba(0,0,0,.9);width:3px;overflow:hidden;">r</span>
<svg style="left:6.3px;top:259.3px;" width="7" height="10" viewBox="0 0 7 10"><path d="M0.2 0.3L6.4 4.8L0.2 9.3z" fill="#8b8c88"/></svg>
<span class="t" style="left:20px;top:257.00px;color:#8b8c88;font-size:13px;letter-spacing:-0.197px;-webkit-text-stroke:.1px;text-shadow:1px 1px 0 rgba(0,0,0,.9);">Tracy Symbol Worker</span>
<svg style="left:6.3px;top:278.3px;" width="7" height="10" viewBox="0 0 7 10"><path d="M0.2 0.3L6.4 4.8L0.2 9.3z" fill="#8b8c88"/></svg>
<span class="t" style="left:20px;top:276.00px;color:#8b8c88;font-size:13px;letter-spacing:-0.094px;-webkit-text-stroke:.1px;text-shadow:1px 1px 0 rgba(0,0,0,.9);">Tracy Sampling</span>
<svg style="left:6.3px;top:297.3px;" width="7" height="10" viewBox="0 0 7 10"><path d="M0.2 0.3L6.4 4.8L0.2 9.3z" fill="#8b8c88"/></svg>
<span class="t" style="left:20px;top:295.00px;color:#8b8c88;font-size:13px;letter-spacing:-0.550px;-webkit-text-stroke:.1px;text-shadow:1px 1px 0 rgba(0,0,0,.9);transform:scaleX(0.9826);transform-origin:0 0;">Tracy DXT1</span>
<div style="left:5px;top:328px;width:1251px;height:1px;background:#86873a;"></div>
<svg style="left:5px;top:319px;" width="10" height="7" viewBox="0 0 10 7"><path d="M0 0.5h9.5L4.75 6z" fill="#dfda50"/></svg>
<svg style="left:20px;top:316px;color:#dfda50" width="16.5" height="10.5" viewBox="0 0 20 12" preserveAspectRatio="none"><path fill-rule="evenodd" d="M1 0H19Q20 0 20 1V2.8Q19 3.2 19 4.1T20 5.4V7.4H0V5.4Q1 5 1 4.1T0 2.8V1Q0 0 1 0ZM4.4 1.9V5.4H5.9V1.9ZM9.25 1.9V5.4H10.75V1.9ZM14.1 1.9V5.4H15.6V1.9Z" fill="currentColor"/><path d="M0 8.2H20V12H18.6V10.4H16.9V12H13.6V10.4H11.9V12H8.1V10.4H6.4V12H3.1V10.4H1.4V12H0Z" fill="currentColor"/></svg>
<span class="t" style="left:39.7px;top:314.00px;color:#dfda50;font-size:13px;letter-spacing:-0.144px;-webkit-text-stroke:.1px;">Memory usage</span>
<span class="t" style="left:132px;top:314.00px;color:#7f803a;font-size:13px;letter-spacing:-0.115px;-webkit-text-stroke:.1px;">(y-range: 1152 bytes, visible data points: 92)</span>
<span class="t" style="left:4.5px;top:329.50px;color:#d4723a;font-size:13px;letter-spacing:-0.365px;-webkit-text-stroke:.1px;text-shadow:1px 1px 0 rgba(0,0,0,.9);">38.63 MB</span>
<div style="left:5px;top:429px;width:1251px;height:1px;background:#86873a;"></div>
<div style="left:5px;top:430px;width:1251px;height:1px;background:#c5722f;"></div>
<svg style="left:0px;top:0px;" width="1276" height="440" viewBox="0 0 1276 440"><rect x="5.1" y="355" width="1.1" height="75" fill="#c5722f"/><path d="M5 353.5H7.3V357H5" fill="none" stroke="#c5722f"/><rect x="9.6" y="414.2" width="3" height="3" fill="none" stroke="#c5722f" stroke-width="1"/><rect x="5" y="428.5" width="3" height="3" fill="none" stroke="#c5722f" stroke-width="1"/><rect x="9" y="428.5" width="3" height="3" fill="none" stroke="#c5722f" stroke-width="1"/><rect x="422.5" y="368" width="1" height="62" fill="#c5722f"/><rect x="421.5" y="367" width="3" height="3" fill="none" stroke="#c5722f" stroke-width="1"/><rect x="418.5" y="421" width="3" height="3" fill="none" stroke="#c5722f" stroke-width="1"/><rect x="419.5" y="425" width="3" height="3" fill="none" stroke="#c5722f" stroke-width="1"/><rect x="422.5" y="423" width="3" height="3" fill="none" stroke="#c5722f" stroke-width="1"/><rect x="424.5" y="420" width="3" height="3" fill="none" stroke="#c5722f" stroke-width="1"/><rect x="426.5" y="417" width="3" height="3" fill="none" stroke="#c5722f" stroke-width="1"/><rect x="427.5" y="423" width="3" height="3" fill="none" stroke="#c5722f" stroke-width="1"/><rect x="427.5" y="427" width="3" height="3" fill="none" stroke="#c5722f" stroke-width="1"/><rect x="423.5" y="427" width="3" height="3" fill="none" stroke="#c5722f" stroke-width="1"/><rect x="418.5" y="428" width="3" height="3" fill="none" stroke="#c5722f" stroke-width="1"/><rect x="425.5" y="429" width="3" height="3" fill="none" stroke="#c5722f" stroke-width="1"/><rect x="421.5" y="430" width="3" height="3" fill="none" stroke="#c5722f" stroke-width="1"/><rect x="428.5" y="429" width="3" height="3" fill="none" stroke="#c5722f" stroke-width="1"/><rect x="418.5" y="420" width="12" height="11" fill="#c5722f" opacity=".45"/><rect x="815.5" y="368" width="1" height="62" fill="#c5722f"/><rect x="814.5" y="367" width="3" height="3" fill="none" stroke="#c5722f" stroke-width="1"/><rect x="811.5" y="421" width="3" height="3" fill="none" stroke="#c5722f" stroke-width="1"/><rect x="812.5" y="425" width="3" height="3" fill="none" stroke="#c5722f" stroke-width="1"/><rect x="815.5" y="423" width="3" height="3" fill="none" stroke="#c5722f" stroke-width="1"/><rect x="817.5" y="420" width="3" height="3" fill="none" stroke="#c5722f" stroke-width="1"/><rect x="819.5" y="417" width="3" height="3" fill="none" stroke="#c5722f" stroke-width="1"/><rect x="820.5" y="423" width="3" height="3" fill="none" stroke="#c5722f" stroke-width="1"/><rect x="820.5" y="427" width="3" height="3" fill="none" stroke="#c5722f" stroke-width="1"/><rect x="816.5" y="427" width="3" height="3" fill="none" stroke="#c5722f" stroke-width="1"/><rect x="811.5" y="428" width="3" height="3" fill="none" stroke="#c5722f" stroke-width="1"/><rect x="818.5" y="429" width="3" height="3" fill="none" stroke="#c5722f" stroke-width="1"/><rect x="814.5" y="430" width="3" height="3" fill="none" stroke="#c5722f" stroke-width="1"/><rect x="821.5" y="429" width="3" height="3" fill="none" stroke="#c5722f" stroke-width="1"/><rect x="811.5" y="420" width="12" height="11" fill="#c5722f" opacity=".45"/><rect x="1252.5" y="423" width="3" height="3" fill="none" stroke="#c5722f" stroke-width="1"/><rect x="1252.5" y="429" width="3" height="3" fill="none" stroke="#c5722f" stroke-width="1"/><rect x="1252.5" y="423" width="3" height="8" fill="#c5722f" opacity=".5"/><rect x="1255" y="366" width="1" height="3" fill="#c5722f"/></svg>
<span class="t" style="left:4.5px;top:414.50px;color:#d4723a;font-size:13px;letter-spacing:-0.365px;-webkit-text-stroke:.1px;text-shadow:1px 1px 0 rgba(0,0,0,.9);">38.63 MB</span>
<div style="left:5px;top:447px;width:1251px;height:1px;background:#86873a;"></div>
<svg style="left:5px;top:438px;" width="10" height="7" viewBox="0 0 10 7"><path d="M0 0.5h9.5L4.75 6z" fill="#dfda50"/></svg>
<svg style="left:19.8px;top:432.5px;color:#dfda50" width="14.2" height="14.2" viewBox="0 0 16 16" preserveAspectRatio="none"><path fill-rule="evenodd" d="M8 0A8 8 0 1 1 8 16A8 8 0 1 1 8 0ZM8 1.6A1 1 0 1 0 8 3.6A1 1 0 1 0 8 1.6ZM3.6 3.4A1 1 0 1 0 3.6 5.4A1 1 0 1 0 3.6 3.4ZM2.2 7.6A1 1 0 1 0 2.2 9.6A1 1 0 1 0 2.2 7.6ZM13.8 7.6A1 1 0 1 0 13.8 9.6A1 1 0 1 0 13.8 7.6ZM11.6 3.2L8.6 8.6A2 2 0 1 0 9.9 9.3L12.8 3.9Z" fill="currentColor"/></svg>
<span class="t" style="left:37.2px;top:433.00px;color:#dfda50;font-size:13px;letter-spacing:-0.550px;-webkit-text-stroke:.1px;transform:scaleX(0.9841);transform-origin:0 0;">CPU usage</span>
<span class="t" style="left:106.2px;top:433.00px;color:#7f803a;font-size:13px;letter-spacing:-0.163px;-webkit-text-stroke:.1px;">(y-range: 2.00%, visible data points: 1)</span>
<div style="left:5px;top:499px;width:1251px;height:49px;background:#1e2f2c;"></div>
<div style="left:5px;top:498px;width:1251px;height:1px;background:#27575a;"></div>
<div style="left:5px;top:499px;width:1251px;height:1px;background:#63b4b8;"></div>
<div style="left:5px;top:548px;width:1251px;height:1px;background:#6c6d3a;"></div>
<span class="t" style="left:4.5px;top:448.50px;color:#48a4bc;font-size:13px;letter-spacing:-0.550px;-webkit-text-stroke:.1px;text-shadow:1px 1px 0 rgba(0,0,0,.9);transform:scaleX(0.9950);transform-origin:0 0;">5.31%</span>
<span class="t" style="left:4.5px;top:534.00px;color:#48a4bc;font-size:13px;letter-spacing:-0.550px;-webkit-text-stroke:.1px;text-shadow:1px 1px 0 rgba(0,0,0,.9);transform:scaleX(0.9950);transform-origin:0 0;">3.31%</span>
<div style="left:4px;top:113px;width:1px;height:445px;background:rgba(255,255,255,.13);"></div>
<div style="left:422px;top:113px;width:1px;height:445px;background:rgba(255,255,255,.13);"></div>
<div style="left:816px;top:113px;width:1px;height:445px;background:rgba(255,255,255,.13);"></div>
<div style="left:1257px;top:112px;width:1px;height:446px;background:rgba(255,255,255,.14);"></div>
<div style="left:1259px;top:130px;width:12px;height:428px;background:#292a25;"></div>
<div style="left:1260px;top:132px;width:8px;height:438px;background:#4c4c4b;border-radius:4px;"></div>
<svg style="left:0px;top:0px;" width="1276" height="200" viewBox="0 0 1276 200"><rect x="4.3" y="31" width="260" height="160.3" fill="rgba(20,20,20,.94)"/><path d="M4.8 191.3V31.5H264.3" fill="none" stroke="rgba(125,125,128,.42)" stroke-width="1"/><path d="M263.8 32V190.8H5.3" fill="none" stroke="rgba(110,110,128,.22)" stroke-width="1"/></svg>
<span class="t" style="left:12.5px;top:39.00px;color:#808080;font-size:13px;letter-spacing:-0.104px;-webkit-text-stroke:.1px;">Connected to:</span>
<span class="t" style="left:101px;top:39.00px;color:#fff;font-size:13px;letter-spacing:-0.550px;transform:scaleX(0.9896);transform-origin:0 0;">127.0.0.1</span>
<div style="left:13.3px;top:61.8px;width:13.4px;height:13.4px;border-radius:50%;background:#e02a2a"></div>
<div class="b" style="left:33px;top:58px;width:150px;height:21px;background:#26426a;border:1px solid #324f7a"></div>
<svg style="left:33px;top:58px;" width="150" height="21" viewBox="0 0 150 21"><path d="M5 17.5L58 17.5L60.5 17L62 4L63.5 16.5L66 17.2L78 17.6L80 16.5L84 16.8L95 17L100 16.4L110 16.8L120 16.5L135 17L140 16.2L146 16.8" fill="none" stroke="#93a7c4" stroke-width="1"/></svg>
<span class="t" style="left:190px;top:61.00px;color:#fff;font-size:13px;letter-spacing:-0.182px;">33.91 Mbps</span>
<span class="t" style="left:12.5px;top:83.00px;color:#808080;font-size:13px;letter-spacing:-0.550px;-webkit-text-stroke:.1px;transform:scaleX(0.9979);transform-origin:0 0;">Ratio</span>
<span class="t" style="left:49.4px;top:83.00px;color:#fff;font-size:13px;letter-spacing:-0.550px;transform:scaleX(0.9646);transform-origin:0 0;">3.3%</span>
<span class="t" style="left:85.6px;top:83.00px;color:#808080;font-size:13px;letter-spacing:-0.550px;-webkit-text-stroke:.1px;transform:scaleX(0.9730);transform-origin:0 0;">Real:</span>
<span class="t" style="left:121.8px;top:83.00px;color:#fff;font-size:13px;letter-spacing:-0.273px;">1038.57 Mbps</span>
<span class="t" style="left:12.5px;top:102.00px;color:#808080;font-size:13px;letter-spacing:0.091px;-webkit-text-stroke:.1px;">Data transferred:</span>
<span class="t" style="left:118.9px;top:102.00px;color:#fff;font-size:13px;letter-spacing:-0.422px;">47.54 MB</span>
<span class="t" style="left:12.5px;top:121.00px;color:#808080;font-size:13px;letter-spacing:-0.126px;-webkit-text-stroke:.1px;">Query backlog:</span>
<span class="t" style="left:106.2px;top:121.00px;color:#fff;font-size:13px;letter-spacing:-0.367px;">249,288</span>
<span class="t" style="left:159.5px;top:121.00px;color:#808080;font-size:13px;letter-spacing:0.000px;-webkit-text-stroke:.1px;">+</span>
<span class="t" style="left:174.5px;top:121.00px;color:#fff;font-size:13px;letter-spacing:-0.550px;transform:scaleX(0.9952);transform-origin:0 0;">8,188</span>
<span class="t" style="left:12.5px;top:140.00px;color:#808080;font-size:13px;letter-spacing:-0.550px;-webkit-text-stroke:.1px;transform:scaleX(0.8292);transform-origin:0 0;">FPS:</span>
<span class="t" style="left:49.4px;top:140.00px;color:#fff;font-size:13px;letter-spacing:-0.550px;transform:scaleX(0.9551);transform-origin:0 0;">58.1</span>
<span class="t" style="left:81.6px;top:140.00px;color:#808080;font-size:13px;letter-spacing:-0.064px;-webkit-text-stroke:.1px;">Frame time:</span>
<span class="t" style="left:158.4px;top:140.00px;color:#fff;font-size:13px;letter-spacing:-0.326px;">17.22 ms</span>
<div style="left:12px;top:159px;width:245px;height:1px;background:#3e3e42;"></div>
<div class="b" style="left:12px;top:163px;width:82px;height:21px;background:#2b5080;border:1px solid #426696;border-radius:4px"></div>
<svg style="left:16.2px;top:167px;color:#fff" width="12" height="12" viewBox="0 0 14 14" preserveAspectRatio="none"><path fill-rule="evenodd" d="M1.5 0H10.2Q10.8 0 11.2 .4L13.6 2.8Q14 3.2 14 3.8V12.5Q14 14 12.5 14H1.5Q0 14 0 12.5V1.5Q0 0 1.5 0ZM2 2V5.6H9.4V2ZM7 7.6A2 2 0 1 0 7 11.6A2 2 0 1 0 7 7.6Z" fill="currentColor"/></svg>
<span class="t" style="left:31.4px;top:166.00px;color:#fff;font-size:13px;letter-spacing:-0.451px;">Save trace</span>
<div class="b" style="left:124px;top:163px;width:48px;height:21px;background:#2b5080;border:1px solid #426696;border-radius:4px"></div>
<svg style="left:128.4px;top:166px;color:#fff" width="10" height="13.5" viewBox="0 0 12 16" preserveAspectRatio="none"><path d="M2.6 0Q3.6 0 3.6 1V4H1.6V1Q1.6 0 2.6 0ZM9.4 0Q10.4 0 10.4 1V4H8.4V1Q8.4 0 9.4 0ZM.6 4.6H11.4Q12 4.6 12 5.2V5.8Q12 6.4 11.4 6.4H11.2V7.8C11.2 10.2 9.6 12 7.2 12.4V16H4.8V12.4C2.4 12 .8 10.2 .8 7.8V6.4H.6Q0 6.4 0 5.8V5.2Q0 4.6 .6 4.6Z" fill="currentColor"/></svg>
<span class="t" style="left:142.6px;top:166.00px;color:#fff;font-size:13px;letter-spacing:-0.550px;transform:scaleX(0.9801);transform-origin:0 0;">Stop</span>
<div class="b" style="left:180px;top:163px;width:69px;height:21px;background:#2b5080;border:1px solid #426696;border-radius:4px"></div>
<svg style="left:184px;top:166.5px;color:#fff" width="14" height="12.5" viewBox="0 0 18 16" preserveAspectRatio="none"><path fill-rule="evenodd" d="M10.3 .8L17.8 13.8C18.4 14.8 17.7 16 16.5 16H1.5C.3 16 -.4 14.8 .2 13.8L7.7 .8C8.3 -.3 9.7 -.3 10.3 .8ZM8 4.6L8.3 10H9.7L10 4.6ZM9 11.2A1.4 1.4 0 1 0 9 14A1.4 1.4 0 1 0 9 11.2Z" fill="currentColor"/></svg>
<span class="t" style="left:201.4px;top:166.00px;color:#fff;font-size:13px;letter-spacing:-0.213px;">Discard</span>
</div></body></html>
